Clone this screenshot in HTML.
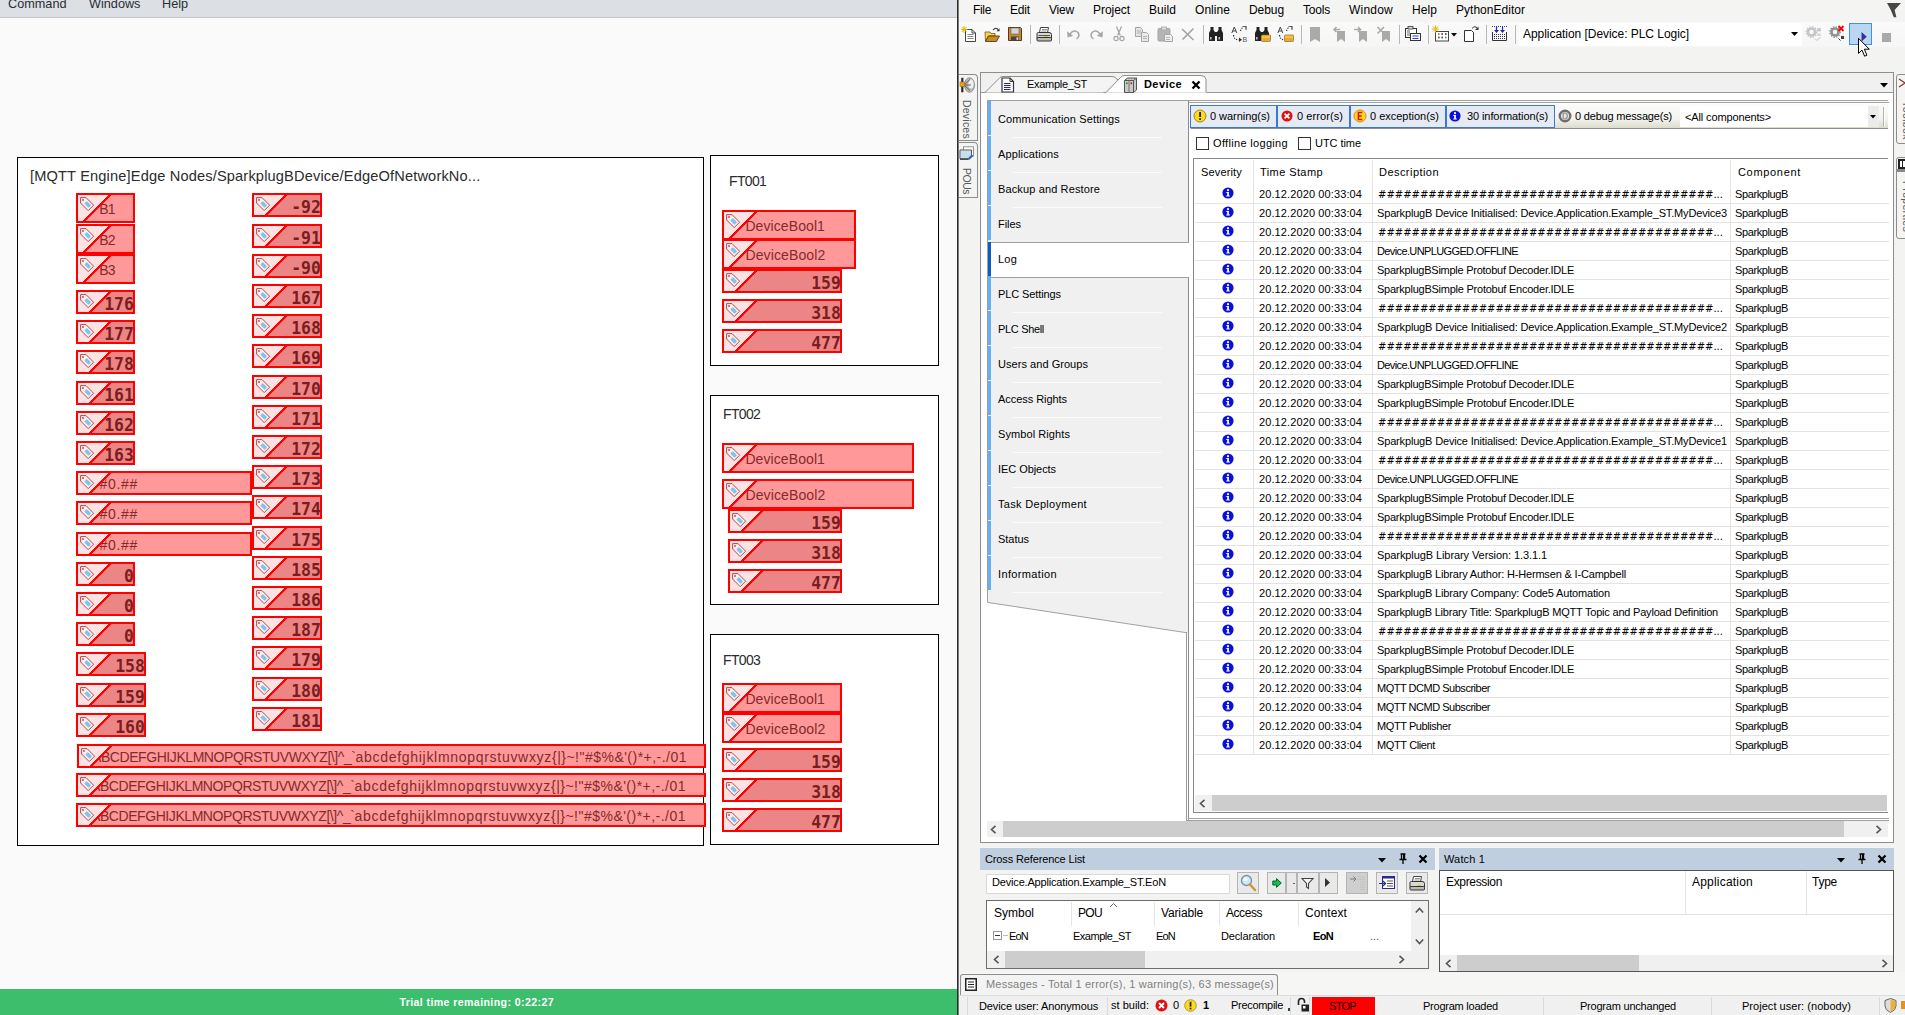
<!DOCTYPE html>
<html><head><meta charset="utf-8"><title>screen</title><style>
*{box-sizing:border-box;margin:0;padding:0}
html,body{width:1905px;height:1015px;overflow:hidden;background:#fafafa}
body{position:relative;font-family:"Liberation Sans",sans-serif;font-size:11px;color:#000}
.a{position:absolute;white-space:pre}
.lt{position:absolute;white-space:pre;font-family:"Liberation Sans",sans-serif;color:#2b2b2b}
.t{position:absolute;border:2px solid #f00;overflow:hidden;white-space:pre}
.t::after{content:"";position:absolute;left:0;top:0;right:0;bottom:0;
 background-image:linear-gradient(135deg,rgba(253,231,231,.95) 0,rgba(253,231,231,.95) 21.2px,#f00 21.9px,#f00 23.4px,rgba(255,0,0,0) 24.1px)}
.t.l{background-color:#ff9999;color:#832a2a;font-size:14px}
.t.l i{font-style:normal;display:inline-block}
.t.n{background-color:#ec8686;color:#7d1c1c;font-family:"DejaVu Sans Mono",monospace;font-weight:bold;font-size:16.5px;text-align:right}
.t.n span{transform:scaleY(1.07);transform-origin:50% 55%}
.t svg{position:absolute;left:2px;top:2px;z-index:2}
.t span{position:absolute}
.box{position:absolute;border:1px solid #000;background:#fff}
</style></head><body>
<div class="a" style="left:0;top:0;width:957px;height:18px;background:#dcdfe3;border-bottom:1px solid #c3c6ca"></div>
<div class="lt" style="left:8px;top:-6px;font-size:12.7px;line-height:20px;color:#2a2e33">Command</div>
<div class="lt" style="left:89px;top:-6px;font-size:12.7px;line-height:20px;color:#2a2e33">Windows</div>
<div class="lt" style="left:162px;top:-6px;font-size:12.7px;line-height:20px;color:#2a2e33">Help</div>
<div class="box" style="left:17px;top:157px;width:687px;height:689px"></div>
<div class="lt" style="left:30px;top:166px;font-size:14.6px;line-height:20px;letter-spacing:0.161px;">[MQTT Engine]Edge Nodes/SparkplugBDevice/EdgeOfNetworkNo...</div>
<div class="t l" style="left:76px;top:193px;width:59px;height:30px"><svg width="15" height="15" viewBox="0 0 15 15"><path d="M0.6 0.6H6L13.6 8.2L8.2 13.6L0.6 6Z" fill="#fdeeee" stroke="#b24a4a" stroke-width="1"/><circle cx="3" cy="3" r="0.9" fill="#b24a4a"/><rect x="4.6" y="5.6" width="6.2" height="3.6" rx="1" transform="rotate(45 7.7 7.4)" fill="#7cc4f2"/></svg><span style="left:21.200000000000003px;top:0;line-height:28px;letter-spacing:-0.812px;">B1</span></div>
<div class="t l" style="left:76px;top:224px;width:59px;height:30px"><svg width="15" height="15" viewBox="0 0 15 15"><path d="M0.6 0.6H6L13.6 8.2L8.2 13.6L0.6 6Z" fill="#fdeeee" stroke="#b24a4a" stroke-width="1"/><circle cx="3" cy="3" r="0.9" fill="#b24a4a"/><rect x="4.6" y="5.6" width="6.2" height="3.6" rx="1" transform="rotate(45 7.7 7.4)" fill="#7cc4f2"/></svg><span style="left:21.200000000000003px;top:0;line-height:28px;letter-spacing:-0.812px;">B2</span></div>
<div class="t l" style="left:76px;top:254px;width:59px;height:30px"><svg width="15" height="15" viewBox="0 0 15 15"><path d="M0.6 0.6H6L13.6 8.2L8.2 13.6L0.6 6Z" fill="#fdeeee" stroke="#b24a4a" stroke-width="1"/><circle cx="3" cy="3" r="0.9" fill="#b24a4a"/><rect x="4.6" y="5.6" width="6.2" height="3.6" rx="1" transform="rotate(45 7.7 7.4)" fill="#7cc4f2"/></svg><span style="left:21.200000000000003px;top:0;line-height:28px;letter-spacing:-0.812px;">B3</span></div>
<div class="t n" style="left:76px;top:290px;width:59px;height:24px"><svg width="15" height="15" viewBox="0 0 15 15"><path d="M0.6 0.6H6L13.6 8.2L8.2 13.6L0.6 6Z" fill="#fdeeee" stroke="#b24a4a" stroke-width="1"/><circle cx="3" cy="3" r="0.9" fill="#b24a4a"/><rect x="4.6" y="5.6" width="6.2" height="3.6" rx="1" transform="rotate(45 7.7 7.4)" fill="#7cc4f2"/></svg><span style="right:-1px;top:0.8px;line-height:23px">176</span></div>
<div class="t n" style="left:76px;top:320px;width:59px;height:24px"><svg width="15" height="15" viewBox="0 0 15 15"><path d="M0.6 0.6H6L13.6 8.2L8.2 13.6L0.6 6Z" fill="#fdeeee" stroke="#b24a4a" stroke-width="1"/><circle cx="3" cy="3" r="0.9" fill="#b24a4a"/><rect x="4.6" y="5.6" width="6.2" height="3.6" rx="1" transform="rotate(45 7.7 7.4)" fill="#7cc4f2"/></svg><span style="right:-1px;top:0.8px;line-height:23px">177</span></div>
<div class="t n" style="left:76px;top:350px;width:59px;height:24px"><svg width="15" height="15" viewBox="0 0 15 15"><path d="M0.6 0.6H6L13.6 8.2L8.2 13.6L0.6 6Z" fill="#fdeeee" stroke="#b24a4a" stroke-width="1"/><circle cx="3" cy="3" r="0.9" fill="#b24a4a"/><rect x="4.6" y="5.6" width="6.2" height="3.6" rx="1" transform="rotate(45 7.7 7.4)" fill="#7cc4f2"/></svg><span style="right:-1px;top:0.8px;line-height:23px">178</span></div>
<div class="t n" style="left:76px;top:381px;width:59px;height:24px"><svg width="15" height="15" viewBox="0 0 15 15"><path d="M0.6 0.6H6L13.6 8.2L8.2 13.6L0.6 6Z" fill="#fdeeee" stroke="#b24a4a" stroke-width="1"/><circle cx="3" cy="3" r="0.9" fill="#b24a4a"/><rect x="4.6" y="5.6" width="6.2" height="3.6" rx="1" transform="rotate(45 7.7 7.4)" fill="#7cc4f2"/></svg><span style="right:-1px;top:0.8px;line-height:23px">161</span></div>
<div class="t n" style="left:76px;top:411px;width:59px;height:24px"><svg width="15" height="15" viewBox="0 0 15 15"><path d="M0.6 0.6H6L13.6 8.2L8.2 13.6L0.6 6Z" fill="#fdeeee" stroke="#b24a4a" stroke-width="1"/><circle cx="3" cy="3" r="0.9" fill="#b24a4a"/><rect x="4.6" y="5.6" width="6.2" height="3.6" rx="1" transform="rotate(45 7.7 7.4)" fill="#7cc4f2"/></svg><span style="right:-1px;top:0.8px;line-height:23px">162</span></div>
<div class="t n" style="left:76px;top:441px;width:59px;height:24px"><svg width="15" height="15" viewBox="0 0 15 15"><path d="M0.6 0.6H6L13.6 8.2L8.2 13.6L0.6 6Z" fill="#fdeeee" stroke="#b24a4a" stroke-width="1"/><circle cx="3" cy="3" r="0.9" fill="#b24a4a"/><rect x="4.6" y="5.6" width="6.2" height="3.6" rx="1" transform="rotate(45 7.7 7.4)" fill="#7cc4f2"/></svg><span style="right:-1px;top:0.8px;line-height:23px">163</span></div>
<div class="t l" style="left:76px;top:471px;width:176px;height:24px"><svg width="15" height="15" viewBox="0 0 15 15"><path d="M0.6 0.6H6L13.6 8.2L8.2 13.6L0.6 6Z" fill="#fdeeee" stroke="#b24a4a" stroke-width="1"/><circle cx="3" cy="3" r="0.9" fill="#b24a4a"/><rect x="4.6" y="5.6" width="6.2" height="3.6" rx="1" transform="rotate(45 7.7 7.4)" fill="#7cc4f2"/></svg><span style="left:21.599999999999994px;top:0;line-height:22px;letter-spacing:0.671px;">#0.##</span></div>
<div class="t l" style="left:76px;top:501px;width:176px;height:24px"><svg width="15" height="15" viewBox="0 0 15 15"><path d="M0.6 0.6H6L13.6 8.2L8.2 13.6L0.6 6Z" fill="#fdeeee" stroke="#b24a4a" stroke-width="1"/><circle cx="3" cy="3" r="0.9" fill="#b24a4a"/><rect x="4.6" y="5.6" width="6.2" height="3.6" rx="1" transform="rotate(45 7.7 7.4)" fill="#7cc4f2"/></svg><span style="left:21.599999999999994px;top:0;line-height:22px;letter-spacing:0.671px;">#0.##</span></div>
<div class="t l" style="left:76px;top:532px;width:176px;height:24px"><svg width="15" height="15" viewBox="0 0 15 15"><path d="M0.6 0.6H6L13.6 8.2L8.2 13.6L0.6 6Z" fill="#fdeeee" stroke="#b24a4a" stroke-width="1"/><circle cx="3" cy="3" r="0.9" fill="#b24a4a"/><rect x="4.6" y="5.6" width="6.2" height="3.6" rx="1" transform="rotate(45 7.7 7.4)" fill="#7cc4f2"/></svg><span style="left:21.599999999999994px;top:0;line-height:22px;letter-spacing:0.671px;">#0.##</span></div>
<div class="t n" style="left:76px;top:562px;width:59px;height:24px"><svg width="15" height="15" viewBox="0 0 15 15"><path d="M0.6 0.6H6L13.6 8.2L8.2 13.6L0.6 6Z" fill="#fdeeee" stroke="#b24a4a" stroke-width="1"/><circle cx="3" cy="3" r="0.9" fill="#b24a4a"/><rect x="4.6" y="5.6" width="6.2" height="3.6" rx="1" transform="rotate(45 7.7 7.4)" fill="#7cc4f2"/></svg><span style="right:-1px;top:0.8px;line-height:23px">0</span></div>
<div class="t n" style="left:76px;top:592px;width:59px;height:24px"><svg width="15" height="15" viewBox="0 0 15 15"><path d="M0.6 0.6H6L13.6 8.2L8.2 13.6L0.6 6Z" fill="#fdeeee" stroke="#b24a4a" stroke-width="1"/><circle cx="3" cy="3" r="0.9" fill="#b24a4a"/><rect x="4.6" y="5.6" width="6.2" height="3.6" rx="1" transform="rotate(45 7.7 7.4)" fill="#7cc4f2"/></svg><span style="right:-1px;top:0.8px;line-height:23px">0</span></div>
<div class="t n" style="left:76px;top:622px;width:59px;height:24px"><svg width="15" height="15" viewBox="0 0 15 15"><path d="M0.6 0.6H6L13.6 8.2L8.2 13.6L0.6 6Z" fill="#fdeeee" stroke="#b24a4a" stroke-width="1"/><circle cx="3" cy="3" r="0.9" fill="#b24a4a"/><rect x="4.6" y="5.6" width="6.2" height="3.6" rx="1" transform="rotate(45 7.7 7.4)" fill="#7cc4f2"/></svg><span style="right:-1px;top:0.8px;line-height:23px">0</span></div>
<div class="t n" style="left:76px;top:652px;width:70px;height:24px"><svg width="15" height="15" viewBox="0 0 15 15"><path d="M0.6 0.6H6L13.6 8.2L8.2 13.6L0.6 6Z" fill="#fdeeee" stroke="#b24a4a" stroke-width="1"/><circle cx="3" cy="3" r="0.9" fill="#b24a4a"/><rect x="4.6" y="5.6" width="6.2" height="3.6" rx="1" transform="rotate(45 7.7 7.4)" fill="#7cc4f2"/></svg><span style="right:-1px;top:0.8px;line-height:23px">158</span></div>
<div class="t n" style="left:76px;top:683px;width:70px;height:24px"><svg width="15" height="15" viewBox="0 0 15 15"><path d="M0.6 0.6H6L13.6 8.2L8.2 13.6L0.6 6Z" fill="#fdeeee" stroke="#b24a4a" stroke-width="1"/><circle cx="3" cy="3" r="0.9" fill="#b24a4a"/><rect x="4.6" y="5.6" width="6.2" height="3.6" rx="1" transform="rotate(45 7.7 7.4)" fill="#7cc4f2"/></svg><span style="right:-1px;top:0.8px;line-height:23px">159</span></div>
<div class="t n" style="left:76px;top:713px;width:70px;height:24px"><svg width="15" height="15" viewBox="0 0 15 15"><path d="M0.6 0.6H6L13.6 8.2L8.2 13.6L0.6 6Z" fill="#fdeeee" stroke="#b24a4a" stroke-width="1"/><circle cx="3" cy="3" r="0.9" fill="#b24a4a"/><rect x="4.6" y="5.6" width="6.2" height="3.6" rx="1" transform="rotate(45 7.7 7.4)" fill="#7cc4f2"/></svg><span style="right:-1px;top:0.8px;line-height:23px">160</span></div>
<div class="t l" style="left:77px;top:744px;width:629px;height:24px"><svg width="15" height="15" viewBox="0 0 15 15"><path d="M0.6 0.6H6L13.6 8.2L8.2 13.6L0.6 6Z" fill="#fdeeee" stroke="#b24a4a" stroke-width="1"/><circle cx="3" cy="3" r="0.9" fill="#b24a4a"/><rect x="4.6" y="5.6" width="6.2" height="3.6" rx="1" transform="rotate(45 7.7 7.4)" fill="#7cc4f2"/></svg><span style="left:13px;top:0;line-height:22px;"><i style="letter-spacing:-0.430px;">ABCDEFGHIJKLMNOPQRSTUVWXYZ[\]^_`</i><i style="letter-spacing:0.704px;">abcdefghijklmnopqrstuvwxyz</i><i style="letter-spacing:0.481px;">{|}~!&quot;#$%&amp;&#x27;()*+,-./01</i></span></div>
<div class="t l" style="left:76px;top:773px;width:630px;height:24px"><svg width="15" height="15" viewBox="0 0 15 15"><path d="M0.6 0.6H6L13.6 8.2L8.2 13.6L0.6 6Z" fill="#fdeeee" stroke="#b24a4a" stroke-width="1"/><circle cx="3" cy="3" r="0.9" fill="#b24a4a"/><rect x="4.6" y="5.6" width="6.2" height="3.6" rx="1" transform="rotate(45 7.7 7.4)" fill="#7cc4f2"/></svg><span style="left:13px;top:0;line-height:22px;"><i style="letter-spacing:-0.430px;">ABCDEFGHIJKLMNOPQRSTUVWXYZ[\]^_`</i><i style="letter-spacing:0.704px;">abcdefghijklmnopqrstuvwxyz</i><i style="letter-spacing:0.481px;">{|}~!&quot;#$%&amp;&#x27;()*+,-./01</i></span></div>
<div class="t l" style="left:76px;top:803px;width:630px;height:24px"><svg width="15" height="15" viewBox="0 0 15 15"><path d="M0.6 0.6H6L13.6 8.2L8.2 13.6L0.6 6Z" fill="#fdeeee" stroke="#b24a4a" stroke-width="1"/><circle cx="3" cy="3" r="0.9" fill="#b24a4a"/><rect x="4.6" y="5.6" width="6.2" height="3.6" rx="1" transform="rotate(45 7.7 7.4)" fill="#7cc4f2"/></svg><span style="left:13px;top:0;line-height:22px;"><i style="letter-spacing:-0.430px;">ABCDEFGHIJKLMNOPQRSTUVWXYZ[\]^_`</i><i style="letter-spacing:0.704px;">abcdefghijklmnopqrstuvwxyz</i><i style="letter-spacing:0.481px;">{|}~!&quot;#$%&amp;&#x27;()*+,-./01</i></span></div>
<div class="t n" style="left:252px;top:193px;width:70px;height:24px"><svg width="15" height="15" viewBox="0 0 15 15"><path d="M0.6 0.6H6L13.6 8.2L8.2 13.6L0.6 6Z" fill="#fdeeee" stroke="#b24a4a" stroke-width="1"/><circle cx="3" cy="3" r="0.9" fill="#b24a4a"/><rect x="4.6" y="5.6" width="6.2" height="3.6" rx="1" transform="rotate(45 7.7 7.4)" fill="#7cc4f2"/></svg><span style="right:-1px;top:0.8px;line-height:23px">-92</span></div>
<div class="t n" style="left:252px;top:224px;width:70px;height:24px"><svg width="15" height="15" viewBox="0 0 15 15"><path d="M0.6 0.6H6L13.6 8.2L8.2 13.6L0.6 6Z" fill="#fdeeee" stroke="#b24a4a" stroke-width="1"/><circle cx="3" cy="3" r="0.9" fill="#b24a4a"/><rect x="4.6" y="5.6" width="6.2" height="3.6" rx="1" transform="rotate(45 7.7 7.4)" fill="#7cc4f2"/></svg><span style="right:-1px;top:0.8px;line-height:23px">-91</span></div>
<div class="t n" style="left:252px;top:254px;width:70px;height:24px"><svg width="15" height="15" viewBox="0 0 15 15"><path d="M0.6 0.6H6L13.6 8.2L8.2 13.6L0.6 6Z" fill="#fdeeee" stroke="#b24a4a" stroke-width="1"/><circle cx="3" cy="3" r="0.9" fill="#b24a4a"/><rect x="4.6" y="5.6" width="6.2" height="3.6" rx="1" transform="rotate(45 7.7 7.4)" fill="#7cc4f2"/></svg><span style="right:-1px;top:0.8px;line-height:23px">-90</span></div>
<div class="t n" style="left:252px;top:284px;width:70px;height:24px"><svg width="15" height="15" viewBox="0 0 15 15"><path d="M0.6 0.6H6L13.6 8.2L8.2 13.6L0.6 6Z" fill="#fdeeee" stroke="#b24a4a" stroke-width="1"/><circle cx="3" cy="3" r="0.9" fill="#b24a4a"/><rect x="4.6" y="5.6" width="6.2" height="3.6" rx="1" transform="rotate(45 7.7 7.4)" fill="#7cc4f2"/></svg><span style="right:-1px;top:0.8px;line-height:23px">167</span></div>
<div class="t n" style="left:252px;top:314px;width:70px;height:24px"><svg width="15" height="15" viewBox="0 0 15 15"><path d="M0.6 0.6H6L13.6 8.2L8.2 13.6L0.6 6Z" fill="#fdeeee" stroke="#b24a4a" stroke-width="1"/><circle cx="3" cy="3" r="0.9" fill="#b24a4a"/><rect x="4.6" y="5.6" width="6.2" height="3.6" rx="1" transform="rotate(45 7.7 7.4)" fill="#7cc4f2"/></svg><span style="right:-1px;top:0.8px;line-height:23px">168</span></div>
<div class="t n" style="left:252px;top:344px;width:70px;height:24px"><svg width="15" height="15" viewBox="0 0 15 15"><path d="M0.6 0.6H6L13.6 8.2L8.2 13.6L0.6 6Z" fill="#fdeeee" stroke="#b24a4a" stroke-width="1"/><circle cx="3" cy="3" r="0.9" fill="#b24a4a"/><rect x="4.6" y="5.6" width="6.2" height="3.6" rx="1" transform="rotate(45 7.7 7.4)" fill="#7cc4f2"/></svg><span style="right:-1px;top:0.8px;line-height:23px">169</span></div>
<div class="t n" style="left:252px;top:375px;width:70px;height:24px"><svg width="15" height="15" viewBox="0 0 15 15"><path d="M0.6 0.6H6L13.6 8.2L8.2 13.6L0.6 6Z" fill="#fdeeee" stroke="#b24a4a" stroke-width="1"/><circle cx="3" cy="3" r="0.9" fill="#b24a4a"/><rect x="4.6" y="5.6" width="6.2" height="3.6" rx="1" transform="rotate(45 7.7 7.4)" fill="#7cc4f2"/></svg><span style="right:-1px;top:0.8px;line-height:23px">170</span></div>
<div class="t n" style="left:252px;top:405px;width:70px;height:24px"><svg width="15" height="15" viewBox="0 0 15 15"><path d="M0.6 0.6H6L13.6 8.2L8.2 13.6L0.6 6Z" fill="#fdeeee" stroke="#b24a4a" stroke-width="1"/><circle cx="3" cy="3" r="0.9" fill="#b24a4a"/><rect x="4.6" y="5.6" width="6.2" height="3.6" rx="1" transform="rotate(45 7.7 7.4)" fill="#7cc4f2"/></svg><span style="right:-1px;top:0.8px;line-height:23px">171</span></div>
<div class="t n" style="left:252px;top:435px;width:70px;height:24px"><svg width="15" height="15" viewBox="0 0 15 15"><path d="M0.6 0.6H6L13.6 8.2L8.2 13.6L0.6 6Z" fill="#fdeeee" stroke="#b24a4a" stroke-width="1"/><circle cx="3" cy="3" r="0.9" fill="#b24a4a"/><rect x="4.6" y="5.6" width="6.2" height="3.6" rx="1" transform="rotate(45 7.7 7.4)" fill="#7cc4f2"/></svg><span style="right:-1px;top:0.8px;line-height:23px">172</span></div>
<div class="t n" style="left:252px;top:465px;width:70px;height:24px"><svg width="15" height="15" viewBox="0 0 15 15"><path d="M0.6 0.6H6L13.6 8.2L8.2 13.6L0.6 6Z" fill="#fdeeee" stroke="#b24a4a" stroke-width="1"/><circle cx="3" cy="3" r="0.9" fill="#b24a4a"/><rect x="4.6" y="5.6" width="6.2" height="3.6" rx="1" transform="rotate(45 7.7 7.4)" fill="#7cc4f2"/></svg><span style="right:-1px;top:0.8px;line-height:23px">173</span></div>
<div class="t n" style="left:252px;top:495px;width:70px;height:24px"><svg width="15" height="15" viewBox="0 0 15 15"><path d="M0.6 0.6H6L13.6 8.2L8.2 13.6L0.6 6Z" fill="#fdeeee" stroke="#b24a4a" stroke-width="1"/><circle cx="3" cy="3" r="0.9" fill="#b24a4a"/><rect x="4.6" y="5.6" width="6.2" height="3.6" rx="1" transform="rotate(45 7.7 7.4)" fill="#7cc4f2"/></svg><span style="right:-1px;top:0.8px;line-height:23px">174</span></div>
<div class="t n" style="left:252px;top:526px;width:70px;height:24px"><svg width="15" height="15" viewBox="0 0 15 15"><path d="M0.6 0.6H6L13.6 8.2L8.2 13.6L0.6 6Z" fill="#fdeeee" stroke="#b24a4a" stroke-width="1"/><circle cx="3" cy="3" r="0.9" fill="#b24a4a"/><rect x="4.6" y="5.6" width="6.2" height="3.6" rx="1" transform="rotate(45 7.7 7.4)" fill="#7cc4f2"/></svg><span style="right:-1px;top:0.8px;line-height:23px">175</span></div>
<div class="t n" style="left:252px;top:556px;width:70px;height:24px"><svg width="15" height="15" viewBox="0 0 15 15"><path d="M0.6 0.6H6L13.6 8.2L8.2 13.6L0.6 6Z" fill="#fdeeee" stroke="#b24a4a" stroke-width="1"/><circle cx="3" cy="3" r="0.9" fill="#b24a4a"/><rect x="4.6" y="5.6" width="6.2" height="3.6" rx="1" transform="rotate(45 7.7 7.4)" fill="#7cc4f2"/></svg><span style="right:-1px;top:0.8px;line-height:23px">185</span></div>
<div class="t n" style="left:252px;top:586px;width:70px;height:24px"><svg width="15" height="15" viewBox="0 0 15 15"><path d="M0.6 0.6H6L13.6 8.2L8.2 13.6L0.6 6Z" fill="#fdeeee" stroke="#b24a4a" stroke-width="1"/><circle cx="3" cy="3" r="0.9" fill="#b24a4a"/><rect x="4.6" y="5.6" width="6.2" height="3.6" rx="1" transform="rotate(45 7.7 7.4)" fill="#7cc4f2"/></svg><span style="right:-1px;top:0.8px;line-height:23px">186</span></div>
<div class="t n" style="left:252px;top:616px;width:70px;height:24px"><svg width="15" height="15" viewBox="0 0 15 15"><path d="M0.6 0.6H6L13.6 8.2L8.2 13.6L0.6 6Z" fill="#fdeeee" stroke="#b24a4a" stroke-width="1"/><circle cx="3" cy="3" r="0.9" fill="#b24a4a"/><rect x="4.6" y="5.6" width="6.2" height="3.6" rx="1" transform="rotate(45 7.7 7.4)" fill="#7cc4f2"/></svg><span style="right:-1px;top:0.8px;line-height:23px">187</span></div>
<div class="t n" style="left:252px;top:646px;width:70px;height:24px"><svg width="15" height="15" viewBox="0 0 15 15"><path d="M0.6 0.6H6L13.6 8.2L8.2 13.6L0.6 6Z" fill="#fdeeee" stroke="#b24a4a" stroke-width="1"/><circle cx="3" cy="3" r="0.9" fill="#b24a4a"/><rect x="4.6" y="5.6" width="6.2" height="3.6" rx="1" transform="rotate(45 7.7 7.4)" fill="#7cc4f2"/></svg><span style="right:-1px;top:0.8px;line-height:23px">179</span></div>
<div class="t n" style="left:252px;top:677px;width:70px;height:24px"><svg width="15" height="15" viewBox="0 0 15 15"><path d="M0.6 0.6H6L13.6 8.2L8.2 13.6L0.6 6Z" fill="#fdeeee" stroke="#b24a4a" stroke-width="1"/><circle cx="3" cy="3" r="0.9" fill="#b24a4a"/><rect x="4.6" y="5.6" width="6.2" height="3.6" rx="1" transform="rotate(45 7.7 7.4)" fill="#7cc4f2"/></svg><span style="right:-1px;top:0.8px;line-height:23px">180</span></div>
<div class="t n" style="left:252px;top:707px;width:70px;height:24px"><svg width="15" height="15" viewBox="0 0 15 15"><path d="M0.6 0.6H6L13.6 8.2L8.2 13.6L0.6 6Z" fill="#fdeeee" stroke="#b24a4a" stroke-width="1"/><circle cx="3" cy="3" r="0.9" fill="#b24a4a"/><rect x="4.6" y="5.6" width="6.2" height="3.6" rx="1" transform="rotate(45 7.7 7.4)" fill="#7cc4f2"/></svg><span style="right:-1px;top:0.8px;line-height:23px">181</span></div>
<div class="box" style="left:710px;top:155px;width:229px;height:211px"></div>
<div class="lt" style="left:729px;top:171px;font-size:14px;line-height:20px;letter-spacing:-0.654px;">FT001</div>
<div class="t l" style="left:722px;top:210px;width:134px;height:30px"><svg width="15" height="15" viewBox="0 0 15 15"><path d="M0.6 0.6H6L13.6 8.2L8.2 13.6L0.6 6Z" fill="#fdeeee" stroke="#b24a4a" stroke-width="1"/><circle cx="3" cy="3" r="0.9" fill="#b24a4a"/><rect x="4.6" y="5.6" width="6.2" height="3.6" rx="1" transform="rotate(45 7.7 7.4)" fill="#7cc4f2"/></svg><span style="left:21.399999999999977px;top:0;line-height:28px;letter-spacing:0.090px;">DeviceBool1</span></div>
<div class="t l" style="left:722px;top:239px;width:134px;height:30px"><svg width="15" height="15" viewBox="0 0 15 15"><path d="M0.6 0.6H6L13.6 8.2L8.2 13.6L0.6 6Z" fill="#fdeeee" stroke="#b24a4a" stroke-width="1"/><circle cx="3" cy="3" r="0.9" fill="#b24a4a"/><rect x="4.6" y="5.6" width="6.2" height="3.6" rx="1" transform="rotate(45 7.7 7.4)" fill="#7cc4f2"/></svg><span style="left:21.399999999999977px;top:0;line-height:28px;letter-spacing:0.126px;">DeviceBool2</span></div>
<div class="t n" style="left:722px;top:269px;width:120px;height:24px"><svg width="15" height="15" viewBox="0 0 15 15"><path d="M0.6 0.6H6L13.6 8.2L8.2 13.6L0.6 6Z" fill="#fdeeee" stroke="#b24a4a" stroke-width="1"/><circle cx="3" cy="3" r="0.9" fill="#b24a4a"/><rect x="4.6" y="5.6" width="6.2" height="3.6" rx="1" transform="rotate(45 7.7 7.4)" fill="#7cc4f2"/></svg><span style="right:-1px;top:0.8px;line-height:23px">159</span></div>
<div class="t n" style="left:722px;top:299px;width:120px;height:24px"><svg width="15" height="15" viewBox="0 0 15 15"><path d="M0.6 0.6H6L13.6 8.2L8.2 13.6L0.6 6Z" fill="#fdeeee" stroke="#b24a4a" stroke-width="1"/><circle cx="3" cy="3" r="0.9" fill="#b24a4a"/><rect x="4.6" y="5.6" width="6.2" height="3.6" rx="1" transform="rotate(45 7.7 7.4)" fill="#7cc4f2"/></svg><span style="right:-1px;top:0.8px;line-height:23px">318</span></div>
<div class="t n" style="left:722px;top:329px;width:120px;height:24px"><svg width="15" height="15" viewBox="0 0 15 15"><path d="M0.6 0.6H6L13.6 8.2L8.2 13.6L0.6 6Z" fill="#fdeeee" stroke="#b24a4a" stroke-width="1"/><circle cx="3" cy="3" r="0.9" fill="#b24a4a"/><rect x="4.6" y="5.6" width="6.2" height="3.6" rx="1" transform="rotate(45 7.7 7.4)" fill="#7cc4f2"/></svg><span style="right:-1px;top:0.8px;line-height:23px">477</span></div>
<div class="box" style="left:710px;top:395px;width:229px;height:210px"></div>
<div class="lt" style="left:723px;top:404px;font-size:14px;line-height:20px;letter-spacing:-0.654px;">FT002</div>
<div class="t l" style="left:722px;top:443px;width:192px;height:30px"><svg width="15" height="15" viewBox="0 0 15 15"><path d="M0.6 0.6H6L13.6 8.2L8.2 13.6L0.6 6Z" fill="#fdeeee" stroke="#b24a4a" stroke-width="1"/><circle cx="3" cy="3" r="0.9" fill="#b24a4a"/><rect x="4.6" y="5.6" width="6.2" height="3.6" rx="1" transform="rotate(45 7.7 7.4)" fill="#7cc4f2"/></svg><span style="left:21.399999999999977px;top:0;line-height:28px;letter-spacing:0.090px;">DeviceBool1</span></div>
<div class="t l" style="left:722px;top:479px;width:192px;height:30px"><svg width="15" height="15" viewBox="0 0 15 15"><path d="M0.6 0.6H6L13.6 8.2L8.2 13.6L0.6 6Z" fill="#fdeeee" stroke="#b24a4a" stroke-width="1"/><circle cx="3" cy="3" r="0.9" fill="#b24a4a"/><rect x="4.6" y="5.6" width="6.2" height="3.6" rx="1" transform="rotate(45 7.7 7.4)" fill="#7cc4f2"/></svg><span style="left:21.399999999999977px;top:0;line-height:28px;letter-spacing:0.126px;">DeviceBool2</span></div>
<div class="t n" style="left:728px;top:509px;width:114px;height:24px"><svg width="15" height="15" viewBox="0 0 15 15"><path d="M0.6 0.6H6L13.6 8.2L8.2 13.6L0.6 6Z" fill="#fdeeee" stroke="#b24a4a" stroke-width="1"/><circle cx="3" cy="3" r="0.9" fill="#b24a4a"/><rect x="4.6" y="5.6" width="6.2" height="3.6" rx="1" transform="rotate(45 7.7 7.4)" fill="#7cc4f2"/></svg><span style="right:-1px;top:0.8px;line-height:23px">159</span></div>
<div class="t n" style="left:728px;top:539px;width:114px;height:24px"><svg width="15" height="15" viewBox="0 0 15 15"><path d="M0.6 0.6H6L13.6 8.2L8.2 13.6L0.6 6Z" fill="#fdeeee" stroke="#b24a4a" stroke-width="1"/><circle cx="3" cy="3" r="0.9" fill="#b24a4a"/><rect x="4.6" y="5.6" width="6.2" height="3.6" rx="1" transform="rotate(45 7.7 7.4)" fill="#7cc4f2"/></svg><span style="right:-1px;top:0.8px;line-height:23px">318</span></div>
<div class="t n" style="left:728px;top:569px;width:114px;height:24px"><svg width="15" height="15" viewBox="0 0 15 15"><path d="M0.6 0.6H6L13.6 8.2L8.2 13.6L0.6 6Z" fill="#fdeeee" stroke="#b24a4a" stroke-width="1"/><circle cx="3" cy="3" r="0.9" fill="#b24a4a"/><rect x="4.6" y="5.6" width="6.2" height="3.6" rx="1" transform="rotate(45 7.7 7.4)" fill="#7cc4f2"/></svg><span style="right:-1px;top:0.8px;line-height:23px">477</span></div>
<div class="box" style="left:710px;top:634px;width:229px;height:211px"></div>
<div class="lt" style="left:723px;top:650px;font-size:14px;line-height:20px;letter-spacing:-0.654px;">FT003</div>
<div class="t l" style="left:722px;top:683px;width:120px;height:30px"><svg width="15" height="15" viewBox="0 0 15 15"><path d="M0.6 0.6H6L13.6 8.2L8.2 13.6L0.6 6Z" fill="#fdeeee" stroke="#b24a4a" stroke-width="1"/><circle cx="3" cy="3" r="0.9" fill="#b24a4a"/><rect x="4.6" y="5.6" width="6.2" height="3.6" rx="1" transform="rotate(45 7.7 7.4)" fill="#7cc4f2"/></svg><span style="left:21.399999999999977px;top:0;line-height:28px;letter-spacing:0.090px;">DeviceBool1</span></div>
<div class="t l" style="left:722px;top:713px;width:120px;height:30px"><svg width="15" height="15" viewBox="0 0 15 15"><path d="M0.6 0.6H6L13.6 8.2L8.2 13.6L0.6 6Z" fill="#fdeeee" stroke="#b24a4a" stroke-width="1"/><circle cx="3" cy="3" r="0.9" fill="#b24a4a"/><rect x="4.6" y="5.6" width="6.2" height="3.6" rx="1" transform="rotate(45 7.7 7.4)" fill="#7cc4f2"/></svg><span style="left:21.399999999999977px;top:0;line-height:28px;letter-spacing:0.126px;">DeviceBool2</span></div>
<div class="t n" style="left:722px;top:748px;width:120px;height:24px"><svg width="15" height="15" viewBox="0 0 15 15"><path d="M0.6 0.6H6L13.6 8.2L8.2 13.6L0.6 6Z" fill="#fdeeee" stroke="#b24a4a" stroke-width="1"/><circle cx="3" cy="3" r="0.9" fill="#b24a4a"/><rect x="4.6" y="5.6" width="6.2" height="3.6" rx="1" transform="rotate(45 7.7 7.4)" fill="#7cc4f2"/></svg><span style="right:-1px;top:0.8px;line-height:23px">159</span></div>
<div class="t n" style="left:722px;top:778px;width:120px;height:24px"><svg width="15" height="15" viewBox="0 0 15 15"><path d="M0.6 0.6H6L13.6 8.2L8.2 13.6L0.6 6Z" fill="#fdeeee" stroke="#b24a4a" stroke-width="1"/><circle cx="3" cy="3" r="0.9" fill="#b24a4a"/><rect x="4.6" y="5.6" width="6.2" height="3.6" rx="1" transform="rotate(45 7.7 7.4)" fill="#7cc4f2"/></svg><span style="right:-1px;top:0.8px;line-height:23px">318</span></div>
<div class="t n" style="left:722px;top:808px;width:120px;height:24px"><svg width="15" height="15" viewBox="0 0 15 15"><path d="M0.6 0.6H6L13.6 8.2L8.2 13.6L0.6 6Z" fill="#fdeeee" stroke="#b24a4a" stroke-width="1"/><circle cx="3" cy="3" r="0.9" fill="#b24a4a"/><rect x="4.6" y="5.6" width="6.2" height="3.6" rx="1" transform="rotate(45 7.7 7.4)" fill="#7cc4f2"/></svg><span style="right:-1px;top:0.8px;line-height:23px">477</span></div>
<div class="a" style="left:0;top:989px;width:957px;height:26px;background:#3cbe6c"></div>
<div class="a" style="left:399.4px;top:995.43px;line-height:15px;font-size:10.6px;letter-spacing:0.397px;font-weight:bold;color:#fff;">Trial time remaining: 0:22:27</div>
<div class="a" style="left:957px;top:0;width:1px;height:1015px;background:#2c2c2c"></div><div class="a" style="left:958px;top:0;width:1px;height:1015px;background:#7a7a7a"></div>
<div class="a" style="left:959px;top:0;width:946px;height:1015px;background:#f0f0f0"></div>
<div class="a" style="left:959px;top:0px;width:946px;height:1015px;background:#f3f3f2;"></div>
<div class="a" style="left:959px;top:0px;width:946px;height:21px;background:#f4f4f3;"></div>
<div class="a" style="left:959px;top:22px;width:946px;height:25px;background:linear-gradient(#fafafa,#f6f6f6);"></div>
<div class="a" style="left:973px;top:2.14px;line-height:17px;font-size:12px;letter-spacing:-0.336px;">File</div>
<div class="a" style="left:1010px;top:2.14px;line-height:17px;font-size:12px;letter-spacing:-0.172px;">Edit</div>
<div class="a" style="left:1049px;top:2.14px;line-height:17px;font-size:12px;letter-spacing:-0.199px;">View</div>
<div class="a" style="left:1093px;top:2.14px;line-height:17px;font-size:12px;letter-spacing:-0.051px;">Project</div>
<div class="a" style="left:1149px;top:2.14px;line-height:17px;font-size:12px;letter-spacing:0.062px;">Build</div>
<div class="a" style="left:1195px;top:2.14px;line-height:17px;font-size:12px;letter-spacing:0.052px;">Online</div>
<div class="a" style="left:1249px;top:2.14px;line-height:17px;font-size:12px;letter-spacing:-0.075px;">Debug</div>
<div class="a" style="left:1303px;top:2.14px;line-height:17px;font-size:12px;letter-spacing:-0.203px;">Tools</div>
<div class="a" style="left:1349px;top:2.14px;line-height:17px;font-size:12px;letter-spacing:0.219px;">Window</div>
<div class="a" style="left:1412px;top:2.14px;line-height:17px;font-size:12px;letter-spacing:0.078px;">Help</div>
<div class="a" style="left:1456px;top:2.14px;line-height:17px;font-size:12px;letter-spacing:0.023px;">PythonEditor</div>
<svg class="a" style="left:961px;top:26px;" width="16" height="16" viewBox="0 0 16 16"><path d="M4.5 3.5H11L14.5 7V15.5H4.5Z" fill="#fff" stroke="#444" stroke-width="1"/><path d="M11 3.5V7H14.5" fill="none" stroke="#444"/><path d="M6.5 8.5H12.5M6.5 10.5H12.5M6.5 12.5H12.5" stroke="#888" stroke-width="1"/><path d="M3 0V7M0 3.5H6.5M0.8 1L5.5 6M5.5 1L0.8 6" stroke="#e8b400" stroke-width="1"/></svg><svg class="a" style="left:984px;top:26px;" width="16" height="16" viewBox="0 0 16 16"><path d="M1 6H6L7 7.5H11V10H4.5L1.5 15Z" fill="#f5d34a" stroke="#7a5a10" stroke-width="0.8"/><path d="M4.5 10H15.5L12.5 15.5H1.5Z" fill="#c98a2b" stroke="#5a3a08" stroke-width="0.9"/><path d="M9 4Q12 0.5 14.5 4" fill="none" stroke="#333" stroke-width="1.1"/><path d="M15.5 2.2V5.2H12.5Z" fill="#333"/></svg><svg class="a" style="left:1007px;top:26px;" width="16" height="16" viewBox="0 0 16 16"><path d="M1.5 1.5H13.5L14.5 2.5V14.5H1.5Z" fill="#c8872d" stroke="#5a3a10" stroke-width="1"/><rect x="4" y="2" width="8" height="6" fill="#d6d6d6" stroke="#666" stroke-width="0.6"/><rect x="4" y="10.5" width="8" height="4" fill="#444"/><rect x="9.5" y="11.3" width="1.8" height="2.6" fill="#ddd"/></svg><div class="a" style="left:1030px;top:25px;width:1px;height:19px;background:#b8b8b8;"></div><svg class="a" style="left:1036px;top:26px;" width="16" height="16" viewBox="0 0 16 16"><path d="M4.5 1.5H12.5L11.5 6.5H3.5Z" fill="#fff" stroke="#444" stroke-width="1"/><path d="M6 3.5H11M5.5 5H10.5" stroke="#777" stroke-width="0.8"/><path d="M1 7.5Q1 6.5 2.5 6.5H13Q15.5 6.5 15.5 8.5V12.5H1Z" fill="#d8d8d8" stroke="#333" stroke-width="1"/><rect x="1" y="11.5" width="14.5" height="3.5" rx="1" fill="#bbb" stroke="#333" stroke-width="1"/><rect x="8.5" y="9.8" width="3.2" height="1.2" fill="#f0c000"/><path d="M2.5 9.5H14" stroke="#555" stroke-width="1"/></svg><div class="a" style="left:1059px;top:25px;width:1px;height:19px;background:#b8b8b8;"></div><svg class="a" style="left:1066px;top:27px;" width="16" height="16" viewBox="0 0 16 16"><path d="M3.5 7.5Q8 1.5 12 5.5Q14.5 9 10.5 12" fill="none" stroke="#a6a6a6" stroke-width="1.5"/><path d="M1 4.2L1.6 10.5L7.2 8.8Z" fill="#a6a6a6"/></svg><svg class="a" style="left:1088px;top:27px;" width="16" height="16" viewBox="0 0 16 16"><path d="M12.5 7.5Q8 1.5 4 5.5Q1.5 9 5.5 12" fill="none" stroke="#a6a6a6" stroke-width="1.5"/><path d="M15 4.2L14.4 10.5L8.8 8.8Z" fill="#a6a6a6"/></svg><svg class="a" style="left:1111px;top:26px;" width="16" height="16" viewBox="0 0 16 16"><path d="M5.5 0.5L9.3 9.5M10.5 0.5L6.7 9.5" stroke="#a6a6a6" stroke-width="1.3" fill="none"/><circle cx="5" cy="12.5" r="2.1" fill="none" stroke="#a6a6a6" stroke-width="1.2"/><circle cx="11" cy="12.5" r="2.1" fill="none" stroke="#a6a6a6" stroke-width="1.2"/></svg><svg class="a" style="left:1134px;top:26px;" width="16" height="16" viewBox="0 0 16 16"><path d="M1.5 1.5H6.5L8.5 3.5V10.5H1.5Z" fill="#e3e3e3" stroke="#a6a6a6"/><path d="M7.5 6.5H12.5L14.5 8.5V15.5H7.5Z" fill="#e9e9e9" stroke="#a6a6a6"/><path d="M9 10.5H13M9 12.5H13M3 5H7M3 7H7" stroke="#a6a6a6" stroke-width="0.8"/></svg><svg class="a" style="left:1157px;top:26px;" width="16" height="16" viewBox="0 0 16 16"><rect x="1" y="2.5" width="12" height="12.5" rx="1" fill="#b4b4b4" stroke="#a6a6a6"/><rect x="4.5" y="1" width="5" height="3" fill="#ddd" stroke="#a6a6a6" stroke-width="0.8"/><path d="M7.5 8.5H13.5L15.5 10.5V15.5H7.5Z" fill="#eee" stroke="#a6a6a6"/><path d="M9 11.5H13M9 13.5H13" stroke="#a6a6a6" stroke-width="0.8"/></svg><svg class="a" style="left:1180px;top:26px;" width="16" height="16" viewBox="0 0 16 16"><path d="M2 3L13.5 14M13.5 2.5L2.5 13.5" stroke="#a6a6a6" stroke-width="1.7" fill="none"/></svg><div class="a" style="left:1203px;top:25px;width:1px;height:19px;background:#b8b8b8;"></div><svg class="a" style="left:1208px;top:26px;" width="16" height="16" viewBox="0 0 16 16"><path d="M2.5 1H5.5V4L7 6V15H1V7L2.5 4ZM10.5 1H13.5V4L15 7V15H9V6L10.5 4Z" fill="#222"/><rect x="6.5" y="6" width="3" height="4" fill="#222"/><rect x="2" y="11" width="1.6" height="2.5" fill="#bbb"/><rect x="10.5" y="11" width="1.6" height="2.5" fill="#bbb"/></svg><svg class="a" style="left:1231px;top:26px;" width="18" height="16" viewBox="0 0 18 16"><path d="M0.8 7L3.3 1L5.8 7M1.8 5H4.8" fill="none" stroke="#444" stroke-width="1"/><path d="M2.5 9Q3 14 8 14" fill="none" stroke="#333" stroke-width="1.2" stroke-dasharray="1.3 1.3"/><path d="M8 11.6V16L11 13.8Z" fill="#333"/><path d="M9.5 5Q10 2 12.5 1.5" fill="none" stroke="#333" stroke-width="1.2" stroke-dasharray="1.3 1.3"/><path d="M11.5 0.3H15V3.8" fill="none" stroke="#333" stroke-width="1.1"/><text x="11.5" y="15.5" font-family="Liberation Sans,sans-serif" font-size="7" fill="#555">B</text></svg><svg class="a" style="left:1254px;top:26px;" width="17" height="16" viewBox="0 0 17 16"><path d="M2.5 1H5.5V4L7 6V15H1V7L2.5 4ZM10.5 1H13.5V4L15 7V15H9V6L10.5 4Z" fill="#222"/><rect x="6.5" y="6" width="3" height="4" fill="#222"/><rect x="2" y="11" width="1.6" height="2.5" fill="#bbb"/><rect x="10.5" y="11" width="1.6" height="2.5" fill="#bbb"/><rect x="7.5" y="9" width="9" height="6.5" rx="0.8" fill="#f2c24a" stroke="#9a6a12" stroke-width="0.7"/><rect x="8.3" y="12" width="7.4" height="3" fill="#e8a735"/></svg><svg class="a" style="left:1277px;top:26px;" width="18" height="16" viewBox="0 0 18 16"><path d="M0.8 7L3.3 1L5.8 7M1.8 5H4.8" fill="none" stroke="#444" stroke-width="1"/><path d="M2.5 9Q3 14 8 14" fill="none" stroke="#333" stroke-width="1.2" stroke-dasharray="1.3 1.3"/><path d="M8 11.6V16L11 13.8Z" fill="#333"/><path d="M9.5 5Q10 2 12.5 1.5" fill="none" stroke="#333" stroke-width="1.2" stroke-dasharray="1.3 1.3"/><path d="M11.5 0.3H15V3.8" fill="none" stroke="#333" stroke-width="1.1"/><rect x="7.5" y="9" width="9" height="6.5" rx="0.8" fill="#f2c24a" stroke="#9a6a12" stroke-width="0.7"/><rect x="8.3" y="12" width="7.4" height="3" fill="#e8a735"/></svg><div class="a" style="left:1301px;top:25px;width:1px;height:19px;background:#b8b8b8;"></div><svg class="a" style="left:1309px;top:26px;" width="16" height="16" viewBox="0 0 16 16"><path d="M1 1H11V16L6 13L1 16Z" fill="#a9aba7"/></svg><svg class="a" style="left:1331px;top:26px;" width="16" height="16" viewBox="0 0 16 16"><path d="M6 5H14V16L10 13L6 16Z" fill="#a9aba7"/><path d="M9 3.5H3M5.5 1L3 3.5L5.5 6" fill="none" stroke="#a9aba7" stroke-width="1.6"/></svg><svg class="a" style="left:1353px;top:26px;" width="16" height="16" viewBox="0 0 16 16"><path d="M6 5H14V16L10 13L6 16Z" fill="#a9aba7"/><path d="M1 3.5H7.5M5 1L7.5 3.5L5 6" fill="none" stroke="#a9aba7" stroke-width="1.6"/></svg><svg class="a" style="left:1376px;top:26px;" width="16" height="16" viewBox="0 0 16 16"><path d="M6 5H14V16L10 13L6 16Z" fill="#a9aba7"/><path d="M1.5 1L8 7.5M8 1L1.5 7.5" fill="none" stroke="#a9aba7" stroke-width="1.6"/></svg><div class="a" style="left:1399px;top:25px;width:1px;height:19px;background:#b8b8b8;"></div><svg class="a" style="left:1405px;top:26px;" width="16" height="16" viewBox="0 0 16 16"><rect x="0.5" y="2.5" width="11" height="9" fill="#fff" stroke="#333"/><rect x="3" y="0.5" width="5" height="2.5" fill="#ddd" stroke="#333" stroke-width="0.8"/><path d="M2 5H5M2 7H5M2 9H5" stroke="#555" stroke-width="0.9"/><rect x="5.5" y="7.5" width="10" height="7" fill="#fff" stroke="#333"/><path d="M7.5 10H13.5M7.5 12.5H13.5" stroke="#2a3cc8" stroke-width="1.2"/></svg><div class="a" style="left:1428px;top:25px;width:1px;height:19px;background:#b8b8b8;"></div><svg class="a" style="left:1432px;top:25px;" width="18" height="17" viewBox="0 0 18 17"><rect x="3.5" y="6.5" width="13" height="9.5" fill="#fff" stroke="#444"/><path d="M6 9H7.5M9.5 9H11M13 9H14.5M6 12.5H7.5M9.5 12.5H11M13 12.5H14.5" stroke-width="1.6" stroke="#4a7a3a"/><path d="M9.5 9H11M6 12.5H7.5" stroke="#c03030" stroke-width="1.6"/><path d="M13 9H14.5M9.5 12.5H11" stroke="#3050c0" stroke-width="1.6"/><path d="M3.5 0.5V7.5M0 4H7M1 1.5L6 6.5M6 1.5L1 6.5" stroke="#e8b400" stroke-width="1"/></svg><svg class="a" style="left:1451px;top:33px;" width="7" height="4" viewBox="0 0 7 4"><path d="M0 0H6L3 3.5Z" fill="#000"/></svg><svg class="a" style="left:1463px;top:25px;" width="17" height="18" viewBox="0 0 17 18"><path d="M1.5 5.5H8.5L10.5 7.5V16.5H1.5Z" fill="#fff" stroke="#333"/><path d="M9 3.5Q12 0 14.5 3.5" fill="none" stroke="#333" stroke-width="1"/><path d="M15.5 1.5V5H12Z" fill="#333"/></svg><div class="a" style="left:1486px;top:25px;width:1px;height:19px;background:#b8b8b8;"></div><svg class="a" style="left:1491px;top:25px;" width="17" height="17" viewBox="0 0 17 17"><path d="M1.5 7V15.5H15.5V7" fill="none" stroke="#333"/><path d="M3 9.5H14M3 11.5H14M3 13.5H14" stroke="#333" stroke-width="1" stroke-dasharray="1 1"/><path d="M1 1.5H16" stroke="#2a3cc8" stroke-width="1" stroke-dasharray="1 1"/><path d="M5.5 2V6M11.5 2V6" stroke="#2a2a9c" stroke-width="1.2"/><path d="M3 5L5.5 8L8 5ZM9 5L11.5 8L14 5Z" fill="#2a2a9c"/></svg><div class="a" style="left:1515px;top:25px;width:1px;height:19px;background:#b8b8b8;"></div><svg class="a" style="left:1805px;top:25px;" width="18" height="18" viewBox="0 0 18 18"><circle cx="6.5" cy="7" r="3.5" fill="none" stroke="#c3c5c6" stroke-width="2.6"/><circle cx="6.5" cy="7" r="5.2" fill="none" stroke="#c3c5c6" stroke-width="1.4" stroke-dasharray="1.4 1.32"/><rect x="12" y="3" width="4" height="3.5" rx="1" fill="#c6c8c9"/><rect x="12" y="8.5" width="4" height="2.5" fill="#d8d8d8"/><path d="M10 13.5L12 15.5L15.5 12" fill="none" stroke="#c0c0c0" stroke-width="1"/></svg><svg class="a" style="left:1828px;top:25px;" width="18" height="18" viewBox="0 0 18 18"><circle cx="7" cy="7" r="3.5" fill="none" stroke="#8f9294" stroke-width="2.6"/><circle cx="7" cy="7" r="5.2" fill="none" stroke="#8f9294" stroke-width="1.4" stroke-dasharray="1.4 1.32"/><path d="M10.5 1L15.5 6M15.5 1L10.5 6" stroke="#f00" stroke-width="1.8"/><rect x="12" y="8.5" width="4" height="2.5" fill="#eee"/><rect x="13" y="11" width="3" height="3" fill="#444"/><path d="M10.5 13.5L12.5 15.5" stroke="#333" stroke-width="1"/></svg>
<div class="a" style="left:1519px;top:23px;width:283px;height:23px;background:#fff;"></div>
<div class="a" style="left:1523px;top:25.54px;line-height:17px;font-size:12px;letter-spacing:-0.046px;">Application [Device: PLC Logic]</div>
<svg class="a" style="left:1791px;top:32px;" width="8" height="5" viewBox="0 0 8 5"><path d="M0 0H7L3.5 4Z" fill="#000"/></svg>
<div class="a" style="left:1849px;top:23px;width:23px;height:22px;background:#b9d7f3;border:1px solid #3a95e8"></div>
<svg class="a" style="left:1861px;top:32px;" width="6" height="10" viewBox="0 0 6 10"><path d="M0.5 0L5.8 4.8L0.5 9.6Z" fill="#3a2f9c"/></svg>
<div class="a" style="left:1882px;top:33px;width:9px;height:9px;background:#a9a9a9;"></div>
<svg class="a" style="left:1857px;top:37px;" width="14" height="21" viewBox="0 0 14 21"><path d="M1.5 1.3V16.4L5 13.1L7.6 19.2L9.9 18.2L7.3 12.2H12.3Z" fill="#fff" stroke="#000" stroke-width="1" stroke-linejoin="miter"/></svg>
<svg class="a" style="left:1887px;top:3px;" width="15" height="15" viewBox="0 0 15 15"><path d="M0 0H14L7.6 7L9.4 14.2H6.8L3.8 7Z" fill="#464646"/></svg>
<div class="a" style="left:959px;top:74px;width:19px;height:67px;background:#f4f4f3;border:1px solid #8c8c8c;border-left:none;border-radius:0 4px 0 0"></div>
<div class="a" style="left:959px;top:142px;width:19px;height:56px;background:#f4f4f3;border:1px solid #8c8c8c;border-left:none;border-radius:0 4px 0 0"></div>
<div class="a" style="left:0px;top:-11.14px;line-height:15px;font-size:10.5px;letter-spacing:0.220px;color:#5a5a5a;left:959.5px;top:99.6px;transform-origin:0 0;transform:translate(14px,0) rotate(90deg);line-height:14px;">Devices</div>
<div class="a" style="left:0px;top:-11.14px;line-height:15px;font-size:10.5px;letter-spacing:-0.504px;color:#5a5a5a;left:959.5px;top:168px;transform-origin:0 0;transform:translate(14px,0) rotate(90deg);line-height:14px;">POUs</div>
<svg class="a" style="left:959px;top:77px;" width="17" height="16" viewBox="0 0 17 16"><ellipse cx="10.5" cy="8" rx="5" ry="7.3" fill="#b9b9b9" stroke="#808080" stroke-width="0.8"/><ellipse cx="12" cy="7" rx="2.6" ry="4.6" fill="#efefef"/><path d="M5 8L11 2.5M5 8L11 13.5M5 8H12" stroke="#555" stroke-width="0.9"/><rect x="2.2" y="0.8" width="2.2" height="14.5" fill="#2a2a2a"/><rect x="1" y="5" width="4.6" height="4.6" fill="#f0a020" stroke="#a86a10" stroke-width="0.6"/></svg>
<svg class="a" style="left:959px;top:146px;" width="17" height="15" viewBox="0 0 17 15"><rect x="4.5" y="0.8" width="10" height="9" fill="#fff" stroke="#888" stroke-width="0.9"/><path d="M1 4H12.5V9L9 12.8H1Z" fill="#eaf3fb" stroke="#555" stroke-width="1"/><path d="M3 5V12M5 5V12M7 5V12M9 5V12M11 5V10" stroke="#9ec4e8" stroke-width="0.9"/><path d="M9 12.8L12.5 9L14.8 9.8L10 14Z" fill="#2a62c8"/><path d="M1 13.2H9.5" stroke="#333" stroke-width="1.2"/></svg>
<div class="a" style="left:1896px;top:74px;width:12px;height:70px;background:#f4f4f3;border:1px solid #8c8c8c;border-radius:3px 0 0 3px"></div>
<div class="a" style="left:1896px;top:157px;width:12px;height:82px;background:#f4f4f3;border:1px solid #8c8c8c;border-radius:3px 0 0 3px"></div>
<div class="a" style="left:0px;top:-11.14px;line-height:15px;font-size:10.5px;letter-spacing:0.400px;color:#5a5a5a;left:1900px;top:101px;transform-origin:0 0;transform:translate(14px,0) rotate(90deg);line-height:14px;">Toolbox</div>
<div class="a" style="left:0px;top:-11.14px;line-height:15px;font-size:10.5px;letter-spacing:0.314px;color:#5a5a5a;left:1900px;top:181px;transform-origin:0 0;transform:translate(14px,0) rotate(90deg);line-height:14px;">Properties</div>
<svg class="a" style="left:1898px;top:78px;" width="8" height="10" viewBox="0 0 8 10"><path d="M1 1L7 5L1 9" fill="none" stroke="#833" stroke-width="1.2"/></svg>
<div class="a" style="left:1898px;top:159px;width:8px;height:10px;background:#fff;border:2px solid #222;border-right:none"></div>
<div class="a" style="left:1902px;top:161px;width:1px;height:6px;background:#222;"></div>
<div class="a" style="left:1897px;top:169px;width:9px;height:3px;background:#8a8a8a;"></div>
<div class="a" style="left:980px;top:72px;width:914px;height:771px;background:#fff;border:1px solid #8e8e8e"></div>
<div class="a" style="left:981px;top:73px;width:912px;height:20px;background:#f0f0f0;border-bottom:1px solid #9a9a9a"></div>
<svg class="a" style="left:981px;top:73px;" width="240" height="21" viewBox="0 0 240 21"><path d="M4 19.5L19 4.5Q20 3.5 22 3.5H131Q134.5 3.5 135 6L122 19.5Z" fill="#f4f4f4"/><path d="M4 19.5L19 4.5Q20 3.5 22 3.5H131Q134.5 3.5 135.5 6L137.5 7" fill="none" stroke="#8e8e8e" stroke-width="1"/><path d="M124.5 20L139.5 4.5Q141 2.5 144 2.5H220Q224.5 2.5 225 6.5V20Z" fill="#fdfdfd" stroke="#8e8e8e" stroke-width="1"/><path d="M125 20.5H225.5" stroke="#fdfdfd" stroke-width="2"/></svg>
<svg class="a" style="left:1001px;top:77px;" width="14" height="16" viewBox="0 0 14 16"><path d="M1 1H9L12.5 4.5V15H1Z" fill="#fff" stroke="#333" stroke-width="1.2"/><path d="M9 1V4.5H12.5" fill="none" stroke="#333" stroke-width="1"/><path d="M3 6.5H9.5M3 8.5H9.5M3 10.5H9.5M3 12.5H9.5" stroke="#1a1aff" stroke-width="1.1"/></svg>
<svg class="a" style="left:1123px;top:77px;" width="15" height="16" viewBox="0 0 15 16"><path d="M1.5 3.5L4.5 1H13.5V13L10.5 15.5H1.5Z" fill="#c9c9c9" stroke="#555" stroke-width="1"/><path d="M1.5 3.5H10.5V15.5M10.5 3.5L13.5 1" fill="none" stroke="#555" stroke-width="1"/><path d="M6 3.5V15.5" stroke="#777" stroke-width="1"/><rect x="3" y="5.5" width="1.6" height="1.6" fill="#0a0"/><rect x="7.5" y="5.5" width="1.6" height="1.6" fill="#d00"/></svg>
<div class="a" style="left:1027px;top:76.69px;line-height:15px;font-size:11px;letter-spacing:-0.298px;">Example_ST</div>
<div class="a" style="left:1144px;top:76.69px;line-height:15px;font-size:11px;letter-spacing:0.419px;font-weight:bold;">Device</div>
<svg class="a" style="left:1191px;top:80px;" width="10" height="10" viewBox="0 0 10 10"><path d="M1.5 1.5L8.5 8.5M8.5 1.5L1.5 8.5" stroke="#000" stroke-width="2.2"/></svg>
<svg class="a" style="left:1880px;top:83px;" width="9" height="5" viewBox="0 0 9 5"><path d="M0 0H8L4 4.5Z" fill="#000"/></svg>
<svg class="a" style="left:987px;top:100px;" width="203" height="535" viewBox="0 0 203 535"><path d="M0 0H202V533L0 502.4Z" fill="#f0f0f0"/><path d="M0.5 0V502.4L200 532.8" fill="none" stroke="#a0a0a0" stroke-width="1"/></svg>
<div class="a" style="left:987px;top:100px;width:901px;height:1px;background:#a0a0a0;"></div>
<div class="a" style="left:1188px;top:100px;width:1px;height:720px;background:#8c8c8c;"></div>
<div class="a" style="left:1186px;top:632px;width:1px;height:189px;background:#9a9a9a;"></div>
<div class="a" style="left:1189px;top:102px;width:700px;height:1px;background:#a0a0a0;"></div>
<div class="a" style="left:1188px;top:818px;width:701px;height:1px;background:#a0a0a0;"></div>
<div class="a" style="left:1186px;top:820px;width:703px;height:1px;background:#a0a0a0;"></div>
<div class="a" style="left:988px;top:101px;width:3px;height:34px;background:#62b0f2;"></div>
<div class="a" style="left:1013px;top:137px;width:149px;height:1px;background:#fbfbfb;"></div>
<div class="a" style="left:998px;top:111.69px;line-height:15px;font-size:11px;letter-spacing:0.126px;">Communication Settings</div>
<div class="a" style="left:988px;top:136px;width:3px;height:34px;background:#62b0f2;"></div>
<div class="a" style="left:1013px;top:172px;width:149px;height:1px;background:#fbfbfb;"></div>
<div class="a" style="left:998px;top:146.69px;line-height:15px;font-size:11px;letter-spacing:0.139px;">Applications</div>
<div class="a" style="left:988px;top:171px;width:3px;height:34px;background:#62b0f2;"></div>
<div class="a" style="left:1013px;top:207px;width:149px;height:1px;background:#fbfbfb;"></div>
<div class="a" style="left:998px;top:181.69px;line-height:15px;font-size:11px;letter-spacing:0.129px;">Backup and Restore</div>
<div class="a" style="left:988px;top:206px;width:3px;height:34px;background:#62b0f2;"></div>
<div class="a" style="left:1013px;top:242px;width:149px;height:1px;background:#fbfbfb;"></div>
<div class="a" style="left:998px;top:216.69px;line-height:15px;font-size:11px;letter-spacing:-0.047px;">Files</div>
<div class="a" style="left:988px;top:242px;width:201px;height:36px;background:#fff;border-top:1px solid #a0a0a0;border-bottom:1px solid #a0a0a0"></div>
<div class="a" style="left:988px;top:242px;width:3px;height:35px;background:#0a5fc0;"></div>
<div class="a" style="left:998px;top:251.69px;line-height:15px;font-size:11px;letter-spacing:0.214px;">Log</div>
<div class="a" style="left:988px;top:276px;width:3px;height:34px;background:#62b0f2;"></div>
<div class="a" style="left:1013px;top:312px;width:149px;height:1px;background:#fbfbfb;"></div>
<div class="a" style="left:998px;top:286.69px;line-height:15px;font-size:11px;letter-spacing:-0.100px;">PLC Settings</div>
<div class="a" style="left:988px;top:311px;width:3px;height:34px;background:#62b0f2;"></div>
<div class="a" style="left:1013px;top:347px;width:149px;height:1px;background:#fbfbfb;"></div>
<div class="a" style="left:998px;top:321.69px;line-height:15px;font-size:11px;letter-spacing:-0.325px;">PLC Shell</div>
<div class="a" style="left:988px;top:346px;width:3px;height:34px;background:#62b0f2;"></div>
<div class="a" style="left:1013px;top:382px;width:149px;height:1px;background:#fbfbfb;"></div>
<div class="a" style="left:998px;top:356.69px;line-height:15px;font-size:11px;letter-spacing:0.046px;">Users and Groups</div>
<div class="a" style="left:988px;top:381px;width:3px;height:34px;background:#62b0f2;"></div>
<div class="a" style="left:1013px;top:417px;width:149px;height:1px;background:#fbfbfb;"></div>
<div class="a" style="left:998px;top:391.69px;line-height:15px;font-size:11px;letter-spacing:-0.054px;">Access Rights</div>
<div class="a" style="left:988px;top:416px;width:3px;height:34px;background:#62b0f2;"></div>
<div class="a" style="left:1013px;top:452px;width:149px;height:1px;background:#fbfbfb;"></div>
<div class="a" style="left:998px;top:426.69px;line-height:15px;font-size:11px;letter-spacing:0.083px;">Symbol Rights</div>
<div class="a" style="left:988px;top:451px;width:3px;height:34px;background:#62b0f2;"></div>
<div class="a" style="left:1013px;top:487px;width:149px;height:1px;background:#fbfbfb;"></div>
<div class="a" style="left:998px;top:461.69px;line-height:15px;font-size:11px;letter-spacing:-0.062px;">IEC Objects</div>
<div class="a" style="left:988px;top:486px;width:3px;height:34px;background:#62b0f2;"></div>
<div class="a" style="left:1013px;top:522px;width:149px;height:1px;background:#fbfbfb;"></div>
<div class="a" style="left:998px;top:496.69px;line-height:15px;font-size:11px;letter-spacing:0.308px;">Task Deployment</div>
<div class="a" style="left:988px;top:521px;width:3px;height:34px;background:#62b0f2;"></div>
<div class="a" style="left:1013px;top:557px;width:149px;height:1px;background:#fbfbfb;"></div>
<div class="a" style="left:998px;top:531.69px;line-height:15px;font-size:11px;letter-spacing:-0.031px;">Status</div>
<div class="a" style="left:988px;top:556px;width:3px;height:34px;background:#62b0f2;"></div>
<div class="a" style="left:1013px;top:592px;width:149px;height:1px;background:#fbfbfb;"></div>
<div class="a" style="left:998px;top:566.69px;line-height:15px;font-size:11px;letter-spacing:0.361px;">Information</div>
<div class="a" style="left:1190px;top:104px;width:698px;height:25px;background:linear-gradient(#fbfbfa 0,#f3f3ef 60%,#d9d9c8 100%);"></div>
<div class="a" style="left:1190px;top:105px;width:87px;height:23px;background:#e6eaf4;border:1px solid #3a78d4"></div>
<div class="a" style="left:1277px;top:105px;width:73px;height:23px;background:#e6eaf4;border:1px solid #3a78d4"></div>
<div class="a" style="left:1350px;top:105px;width:96px;height:23px;background:#e6eaf4;border:1px solid #3a78d4"></div>
<div class="a" style="left:1446px;top:105px;width:109px;height:23px;background:#e6eaf4;border:1px solid #3a78d4"></div>
<div class="a" style="left:1191px;top:128px;width:697px;height:1px;background:#8f8f8a;"></div>
<div class="a" style="left:1210px;top:108.69px;line-height:15px;font-size:11px;letter-spacing:-0.044px;">0 warning(s)</div>
<div class="a" style="left:1297px;top:108.69px;line-height:15px;font-size:11px;letter-spacing:0.077px;">0 error(s)</div>
<div class="a" style="left:1370px;top:108.69px;line-height:15px;font-size:11px;letter-spacing:-0.007px;">0 exception(s)</div>
<div class="a" style="left:1467px;top:108.69px;line-height:15px;font-size:11px;letter-spacing:-0.091px;">30 information(s)</div>
<div class="a" style="left:1575px;top:108.69px;line-height:15px;font-size:11px;letter-spacing:-0.182px;">0 debug message(s)</div>
<svg class="a" style="left:1193px;top:109px;" width="14" height="14" viewBox="0 0 14 14"><circle cx="7" cy="7" r="6" fill="#ffd91a" stroke="#a08a10" stroke-width="1"/><rect x="6.2" y="3" width="1.8" height="5" fill="#222"/><rect x="6.2" y="9.2" width="1.8" height="1.8" fill="#222"/></svg><svg class="a" style="left:1281px;top:110px;" width="12" height="12" viewBox="0 0 12 12"><circle cx="6" cy="6" r="5.5" fill="#e01010"/><path d="M3.6 3.6L8.4 8.4M8.4 3.6L3.6 8.4" stroke="#fff" stroke-width="1.8"/></svg><svg class="a" style="left:1353px;top:109px;" width="14" height="14" viewBox="0 0 14 14"><circle cx="7" cy="7" r="6" fill="#ffd91a" stroke="#d09010" stroke-width="1"/><path d="M5 3.6H9.3M5 7H8.8M5 10.4H9.3M5.4 3V11" stroke="#e01010" stroke-width="1.5" fill="none"/></svg><svg class="a" style="left:1449px;top:110px;" width="12" height="12" viewBox="0 0 12 12"><circle cx="6" cy="6" r="5.6" fill="#0a10dc"/><circle cx="6" cy="3.2" r="1.1" fill="#fff"/><path d="M4.3 5H6.9V8.6H7.8V9.6H4.3V8.6H5.2V6H4.3Z" fill="#fff"/></svg><svg class="a" style="left:1558px;top:109px;" width="14" height="14" viewBox="0 0 14 14"><circle cx="7" cy="7" r="5.3" fill="#e4e4e4" stroke="#6e6e6e" stroke-width="2.4"/><path d="M5.2 4.2H7Q9.4 4.2 9.4 7Q9.4 9.8 7 9.8H5.2Z" fill="none" stroke="#9a9a9a" stroke-width="1.3"/></svg>
<div class="a" style="left:1680px;top:106px;width:198px;height:21px;background:#fff;"></div>
<div class="a" style="left:1868px;top:106px;width:11px;height:21px;background:#ececec;"></div>
<svg class="a" style="left:1870px;top:115px;" width="7" height="4" viewBox="0 0 7 4"><path d="M0 0H6L3 3.5Z" fill="#000"/></svg>
<div class="a" style="left:1685px;top:109.69px;line-height:15px;font-size:11px;letter-spacing:-0.129px;">&lt;All components&gt;</div>
<div class="a" style="left:1883px;top:107px;width:1px;height:20px;background:#b5b5a5;"></div>
<div class="a" style="left:1884px;top:107px;width:1px;height:20px;background:#fff;"></div>
<div class="a" style="left:1196px;top:137px;width:13px;height:13px;background:#fff;border:1px solid #333"></div>
<div class="a" style="left:1213px;top:135.69px;line-height:15px;font-size:11px;letter-spacing:0.325px;">Offline logging</div>
<div class="a" style="left:1298px;top:137px;width:13px;height:13px;background:#fff;border:1px solid #333"></div>
<div class="a" style="left:1315px;top:135.69px;line-height:15px;font-size:11px;letter-spacing:-0.057px;">UTC time</div>
<div class="a" style="left:1193px;top:158px;width:695px;height:655px;background:#fff;border:1px solid #828790;border-right:none"></div>
<div class="a" style="left:1201px;top:164.69px;line-height:15px;font-size:11px;letter-spacing:0.156px;">Severity</div>
<div class="a" style="left:1260px;top:164.69px;line-height:15px;font-size:11px;letter-spacing:0.411px;">Time Stamp</div>
<div class="a" style="left:1379px;top:164.69px;line-height:15px;font-size:11px;letter-spacing:0.452px;">Description</div>
<div class="a" style="left:1738px;top:164.69px;line-height:15px;font-size:11px;letter-spacing:0.681px;">Component</div>
<div class="a" style="left:1253px;top:160px;width:1px;height:24px;background:#e5e5e5;"></div>
<div class="a" style="left:1372px;top:160px;width:1px;height:24px;background:#e5e5e5;"></div>
<div class="a" style="left:1730px;top:160px;width:1px;height:24px;background:#e5e5e5;"></div>
<div class="a" style="left:1195px;top:203px;width:694px;height:1px;background:#e3e3e3;"></div>
<svg class="a" style="left:1222px;top:187px;" width="12" height="12" viewBox="0 0 12 12"><circle cx="6" cy="6" r="5.6" fill="#0a10dc"/><circle cx="6" cy="3.2" r="1.1" fill="#fff"/><path d="M4.3 5H6.9V8.6H7.8V9.6H4.3V8.6H5.2V6H4.3Z" fill="#fff"/></svg>
<div class="a" style="left:1259px;top:186.69px;line-height:15px;font-size:11px;letter-spacing:0.109px;">20.12.2020 00:33:04</div>
<div class="a" style="left:1378px;top:187.53px;line-height:14px;font-size:10px;letter-spacing:0.007px;font-family:'DejaVu Sans',sans-serif;">########################################...</div>
<div class="a" style="left:1735px;top:186.69px;line-height:15px;font-size:11px;letter-spacing:-0.388px;">SparkplugB</div>
<div class="a" style="left:1195px;top:222px;width:694px;height:1px;background:#e3e3e3;"></div>
<svg class="a" style="left:1222px;top:206px;" width="12" height="12" viewBox="0 0 12 12"><circle cx="6" cy="6" r="5.6" fill="#0a10dc"/><circle cx="6" cy="3.2" r="1.1" fill="#fff"/><path d="M4.3 5H6.9V8.6H7.8V9.6H4.3V8.6H5.2V6H4.3Z" fill="#fff"/></svg>
<div class="a" style="left:1259px;top:205.69px;line-height:15px;font-size:11px;letter-spacing:0.109px;">20.12.2020 00:33:04</div>
<div class="a" style="left:1377px;top:205.69px;line-height:15px;font-size:11px;letter-spacing:-0.162px;">SparkplugB Device Initialised: Device.Application.Example_ST.MyDevice3</div>
<div class="a" style="left:1735px;top:205.69px;line-height:15px;font-size:11px;letter-spacing:-0.388px;">SparkplugB</div>
<div class="a" style="left:1195px;top:241px;width:694px;height:1px;background:#e3e3e3;"></div>
<svg class="a" style="left:1222px;top:225px;" width="12" height="12" viewBox="0 0 12 12"><circle cx="6" cy="6" r="5.6" fill="#0a10dc"/><circle cx="6" cy="3.2" r="1.1" fill="#fff"/><path d="M4.3 5H6.9V8.6H7.8V9.6H4.3V8.6H5.2V6H4.3Z" fill="#fff"/></svg>
<div class="a" style="left:1259px;top:224.69px;line-height:15px;font-size:11px;letter-spacing:0.109px;">20.12.2020 00:33:04</div>
<div class="a" style="left:1378px;top:225.53px;line-height:14px;font-size:10px;letter-spacing:0.007px;font-family:'DejaVu Sans',sans-serif;">########################################...</div>
<div class="a" style="left:1735px;top:224.69px;line-height:15px;font-size:11px;letter-spacing:-0.388px;">SparkplugB</div>
<div class="a" style="left:1195px;top:260px;width:694px;height:1px;background:#e3e3e3;"></div>
<svg class="a" style="left:1222px;top:244px;" width="12" height="12" viewBox="0 0 12 12"><circle cx="6" cy="6" r="5.6" fill="#0a10dc"/><circle cx="6" cy="3.2" r="1.1" fill="#fff"/><path d="M4.3 5H6.9V8.6H7.8V9.6H4.3V8.6H5.2V6H4.3Z" fill="#fff"/></svg>
<div class="a" style="left:1259px;top:243.69px;line-height:15px;font-size:11px;letter-spacing:0.109px;">20.12.2020 00:33:04</div>
<div class="a" style="left:1377px;top:243.69px;line-height:15px;font-size:11px;letter-spacing:-0.620px;">Device.UNPLUGGED.OFFLINE</div>
<div class="a" style="left:1735px;top:243.69px;line-height:15px;font-size:11px;letter-spacing:-0.388px;">SparkplugB</div>
<div class="a" style="left:1195px;top:279px;width:694px;height:1px;background:#e3e3e3;"></div>
<svg class="a" style="left:1222px;top:263px;" width="12" height="12" viewBox="0 0 12 12"><circle cx="6" cy="6" r="5.6" fill="#0a10dc"/><circle cx="6" cy="3.2" r="1.1" fill="#fff"/><path d="M4.3 5H6.9V8.6H7.8V9.6H4.3V8.6H5.2V6H4.3Z" fill="#fff"/></svg>
<div class="a" style="left:1259px;top:262.69px;line-height:15px;font-size:11px;letter-spacing:0.109px;">20.12.2020 00:33:04</div>
<div class="a" style="left:1377px;top:262.69px;line-height:15px;font-size:11px;letter-spacing:-0.255px;">SparkplugBSimple Protobuf Decoder.IDLE</div>
<div class="a" style="left:1735px;top:262.69px;line-height:15px;font-size:11px;letter-spacing:-0.388px;">SparkplugB</div>
<div class="a" style="left:1195px;top:298px;width:694px;height:1px;background:#e3e3e3;"></div>
<svg class="a" style="left:1222px;top:282px;" width="12" height="12" viewBox="0 0 12 12"><circle cx="6" cy="6" r="5.6" fill="#0a10dc"/><circle cx="6" cy="3.2" r="1.1" fill="#fff"/><path d="M4.3 5H6.9V8.6H7.8V9.6H4.3V8.6H5.2V6H4.3Z" fill="#fff"/></svg>
<div class="a" style="left:1259px;top:281.69px;line-height:15px;font-size:11px;letter-spacing:0.109px;">20.12.2020 00:33:04</div>
<div class="a" style="left:1377px;top:281.69px;line-height:15px;font-size:11px;letter-spacing:-0.238px;">SparkplugBSimple Protobuf Encoder.IDLE</div>
<div class="a" style="left:1735px;top:281.69px;line-height:15px;font-size:11px;letter-spacing:-0.388px;">SparkplugB</div>
<div class="a" style="left:1195px;top:317px;width:694px;height:1px;background:#e3e3e3;"></div>
<svg class="a" style="left:1222px;top:301px;" width="12" height="12" viewBox="0 0 12 12"><circle cx="6" cy="6" r="5.6" fill="#0a10dc"/><circle cx="6" cy="3.2" r="1.1" fill="#fff"/><path d="M4.3 5H6.9V8.6H7.8V9.6H4.3V8.6H5.2V6H4.3Z" fill="#fff"/></svg>
<div class="a" style="left:1259px;top:300.69px;line-height:15px;font-size:11px;letter-spacing:0.109px;">20.12.2020 00:33:04</div>
<div class="a" style="left:1378px;top:301.54px;line-height:14px;font-size:10px;letter-spacing:0.007px;font-family:'DejaVu Sans',sans-serif;">########################################...</div>
<div class="a" style="left:1735px;top:300.69px;line-height:15px;font-size:11px;letter-spacing:-0.388px;">SparkplugB</div>
<div class="a" style="left:1195px;top:336px;width:694px;height:1px;background:#e3e3e3;"></div>
<svg class="a" style="left:1222px;top:320px;" width="12" height="12" viewBox="0 0 12 12"><circle cx="6" cy="6" r="5.6" fill="#0a10dc"/><circle cx="6" cy="3.2" r="1.1" fill="#fff"/><path d="M4.3 5H6.9V8.6H7.8V9.6H4.3V8.6H5.2V6H4.3Z" fill="#fff"/></svg>
<div class="a" style="left:1259px;top:319.69px;line-height:15px;font-size:11px;letter-spacing:0.109px;">20.12.2020 00:33:04</div>
<div class="a" style="left:1377px;top:319.69px;line-height:15px;font-size:11px;letter-spacing:-0.162px;">SparkplugB Device Initialised: Device.Application.Example_ST.MyDevice2</div>
<div class="a" style="left:1735px;top:319.69px;line-height:15px;font-size:11px;letter-spacing:-0.388px;">SparkplugB</div>
<div class="a" style="left:1195px;top:355px;width:694px;height:1px;background:#e3e3e3;"></div>
<svg class="a" style="left:1222px;top:339px;" width="12" height="12" viewBox="0 0 12 12"><circle cx="6" cy="6" r="5.6" fill="#0a10dc"/><circle cx="6" cy="3.2" r="1.1" fill="#fff"/><path d="M4.3 5H6.9V8.6H7.8V9.6H4.3V8.6H5.2V6H4.3Z" fill="#fff"/></svg>
<div class="a" style="left:1259px;top:338.69px;line-height:15px;font-size:11px;letter-spacing:0.109px;">20.12.2020 00:33:04</div>
<div class="a" style="left:1378px;top:339.54px;line-height:14px;font-size:10px;letter-spacing:0.007px;font-family:'DejaVu Sans',sans-serif;">########################################...</div>
<div class="a" style="left:1735px;top:338.69px;line-height:15px;font-size:11px;letter-spacing:-0.388px;">SparkplugB</div>
<div class="a" style="left:1195px;top:374px;width:694px;height:1px;background:#e3e3e3;"></div>
<svg class="a" style="left:1222px;top:358px;" width="12" height="12" viewBox="0 0 12 12"><circle cx="6" cy="6" r="5.6" fill="#0a10dc"/><circle cx="6" cy="3.2" r="1.1" fill="#fff"/><path d="M4.3 5H6.9V8.6H7.8V9.6H4.3V8.6H5.2V6H4.3Z" fill="#fff"/></svg>
<div class="a" style="left:1259px;top:357.69px;line-height:15px;font-size:11px;letter-spacing:0.109px;">20.12.2020 00:33:04</div>
<div class="a" style="left:1377px;top:357.69px;line-height:15px;font-size:11px;letter-spacing:-0.620px;">Device.UNPLUGGED.OFFLINE</div>
<div class="a" style="left:1735px;top:357.69px;line-height:15px;font-size:11px;letter-spacing:-0.388px;">SparkplugB</div>
<div class="a" style="left:1195px;top:393px;width:694px;height:1px;background:#e3e3e3;"></div>
<svg class="a" style="left:1222px;top:377px;" width="12" height="12" viewBox="0 0 12 12"><circle cx="6" cy="6" r="5.6" fill="#0a10dc"/><circle cx="6" cy="3.2" r="1.1" fill="#fff"/><path d="M4.3 5H6.9V8.6H7.8V9.6H4.3V8.6H5.2V6H4.3Z" fill="#fff"/></svg>
<div class="a" style="left:1259px;top:376.69px;line-height:15px;font-size:11px;letter-spacing:0.109px;">20.12.2020 00:33:04</div>
<div class="a" style="left:1377px;top:376.69px;line-height:15px;font-size:11px;letter-spacing:-0.255px;">SparkplugBSimple Protobuf Decoder.IDLE</div>
<div class="a" style="left:1735px;top:376.69px;line-height:15px;font-size:11px;letter-spacing:-0.388px;">SparkplugB</div>
<div class="a" style="left:1195px;top:412px;width:694px;height:1px;background:#e3e3e3;"></div>
<svg class="a" style="left:1222px;top:396px;" width="12" height="12" viewBox="0 0 12 12"><circle cx="6" cy="6" r="5.6" fill="#0a10dc"/><circle cx="6" cy="3.2" r="1.1" fill="#fff"/><path d="M4.3 5H6.9V8.6H7.8V9.6H4.3V8.6H5.2V6H4.3Z" fill="#fff"/></svg>
<div class="a" style="left:1259px;top:395.69px;line-height:15px;font-size:11px;letter-spacing:0.109px;">20.12.2020 00:33:04</div>
<div class="a" style="left:1377px;top:395.69px;line-height:15px;font-size:11px;letter-spacing:-0.238px;">SparkplugBSimple Protobuf Encoder.IDLE</div>
<div class="a" style="left:1735px;top:395.69px;line-height:15px;font-size:11px;letter-spacing:-0.388px;">SparkplugB</div>
<div class="a" style="left:1195px;top:431px;width:694px;height:1px;background:#e3e3e3;"></div>
<svg class="a" style="left:1222px;top:415px;" width="12" height="12" viewBox="0 0 12 12"><circle cx="6" cy="6" r="5.6" fill="#0a10dc"/><circle cx="6" cy="3.2" r="1.1" fill="#fff"/><path d="M4.3 5H6.9V8.6H7.8V9.6H4.3V8.6H5.2V6H4.3Z" fill="#fff"/></svg>
<div class="a" style="left:1259px;top:414.69px;line-height:15px;font-size:11px;letter-spacing:0.109px;">20.12.2020 00:33:04</div>
<div class="a" style="left:1378px;top:415.54px;line-height:14px;font-size:10px;letter-spacing:0.007px;font-family:'DejaVu Sans',sans-serif;">########################################...</div>
<div class="a" style="left:1735px;top:414.69px;line-height:15px;font-size:11px;letter-spacing:-0.388px;">SparkplugB</div>
<div class="a" style="left:1195px;top:450px;width:694px;height:1px;background:#e3e3e3;"></div>
<svg class="a" style="left:1222px;top:434px;" width="12" height="12" viewBox="0 0 12 12"><circle cx="6" cy="6" r="5.6" fill="#0a10dc"/><circle cx="6" cy="3.2" r="1.1" fill="#fff"/><path d="M4.3 5H6.9V8.6H7.8V9.6H4.3V8.6H5.2V6H4.3Z" fill="#fff"/></svg>
<div class="a" style="left:1259px;top:433.69px;line-height:15px;font-size:11px;letter-spacing:0.109px;">20.12.2020 00:33:04</div>
<div class="a" style="left:1377px;top:433.69px;line-height:15px;font-size:11px;letter-spacing:-0.162px;">SparkplugB Device Initialised: Device.Application.Example_ST.MyDevice1</div>
<div class="a" style="left:1735px;top:433.69px;line-height:15px;font-size:11px;letter-spacing:-0.388px;">SparkplugB</div>
<div class="a" style="left:1195px;top:469px;width:694px;height:1px;background:#e3e3e3;"></div>
<svg class="a" style="left:1222px;top:453px;" width="12" height="12" viewBox="0 0 12 12"><circle cx="6" cy="6" r="5.6" fill="#0a10dc"/><circle cx="6" cy="3.2" r="1.1" fill="#fff"/><path d="M4.3 5H6.9V8.6H7.8V9.6H4.3V8.6H5.2V6H4.3Z" fill="#fff"/></svg>
<div class="a" style="left:1259px;top:452.69px;line-height:15px;font-size:11px;letter-spacing:0.109px;">20.12.2020 00:33:04</div>
<div class="a" style="left:1378px;top:453.54px;line-height:14px;font-size:10px;letter-spacing:0.007px;font-family:'DejaVu Sans',sans-serif;">########################################...</div>
<div class="a" style="left:1735px;top:452.69px;line-height:15px;font-size:11px;letter-spacing:-0.388px;">SparkplugB</div>
<div class="a" style="left:1195px;top:488px;width:694px;height:1px;background:#e3e3e3;"></div>
<svg class="a" style="left:1222px;top:472px;" width="12" height="12" viewBox="0 0 12 12"><circle cx="6" cy="6" r="5.6" fill="#0a10dc"/><circle cx="6" cy="3.2" r="1.1" fill="#fff"/><path d="M4.3 5H6.9V8.6H7.8V9.6H4.3V8.6H5.2V6H4.3Z" fill="#fff"/></svg>
<div class="a" style="left:1259px;top:471.69px;line-height:15px;font-size:11px;letter-spacing:0.109px;">20.12.2020 00:33:04</div>
<div class="a" style="left:1377px;top:471.69px;line-height:15px;font-size:11px;letter-spacing:-0.620px;">Device.UNPLUGGED.OFFLINE</div>
<div class="a" style="left:1735px;top:471.69px;line-height:15px;font-size:11px;letter-spacing:-0.388px;">SparkplugB</div>
<div class="a" style="left:1195px;top:507px;width:694px;height:1px;background:#e3e3e3;"></div>
<svg class="a" style="left:1222px;top:491px;" width="12" height="12" viewBox="0 0 12 12"><circle cx="6" cy="6" r="5.6" fill="#0a10dc"/><circle cx="6" cy="3.2" r="1.1" fill="#fff"/><path d="M4.3 5H6.9V8.6H7.8V9.6H4.3V8.6H5.2V6H4.3Z" fill="#fff"/></svg>
<div class="a" style="left:1259px;top:490.69px;line-height:15px;font-size:11px;letter-spacing:0.109px;">20.12.2020 00:33:04</div>
<div class="a" style="left:1377px;top:490.69px;line-height:15px;font-size:11px;letter-spacing:-0.255px;">SparkplugBSimple Protobuf Decoder.IDLE</div>
<div class="a" style="left:1735px;top:490.69px;line-height:15px;font-size:11px;letter-spacing:-0.388px;">SparkplugB</div>
<div class="a" style="left:1195px;top:526px;width:694px;height:1px;background:#e3e3e3;"></div>
<svg class="a" style="left:1222px;top:510px;" width="12" height="12" viewBox="0 0 12 12"><circle cx="6" cy="6" r="5.6" fill="#0a10dc"/><circle cx="6" cy="3.2" r="1.1" fill="#fff"/><path d="M4.3 5H6.9V8.6H7.8V9.6H4.3V8.6H5.2V6H4.3Z" fill="#fff"/></svg>
<div class="a" style="left:1259px;top:509.69px;line-height:15px;font-size:11px;letter-spacing:0.109px;">20.12.2020 00:33:04</div>
<div class="a" style="left:1377px;top:509.69px;line-height:15px;font-size:11px;letter-spacing:-0.238px;">SparkplugBSimple Protobuf Encoder.IDLE</div>
<div class="a" style="left:1735px;top:509.69px;line-height:15px;font-size:11px;letter-spacing:-0.388px;">SparkplugB</div>
<div class="a" style="left:1195px;top:545px;width:694px;height:1px;background:#e3e3e3;"></div>
<svg class="a" style="left:1222px;top:529px;" width="12" height="12" viewBox="0 0 12 12"><circle cx="6" cy="6" r="5.6" fill="#0a10dc"/><circle cx="6" cy="3.2" r="1.1" fill="#fff"/><path d="M4.3 5H6.9V8.6H7.8V9.6H4.3V8.6H5.2V6H4.3Z" fill="#fff"/></svg>
<div class="a" style="left:1259px;top:528.69px;line-height:15px;font-size:11px;letter-spacing:0.109px;">20.12.2020 00:33:04</div>
<div class="a" style="left:1378px;top:529.53px;line-height:14px;font-size:10px;letter-spacing:0.007px;font-family:'DejaVu Sans',sans-serif;">########################################...</div>
<div class="a" style="left:1735px;top:528.69px;line-height:15px;font-size:11px;letter-spacing:-0.388px;">SparkplugB</div>
<div class="a" style="left:1195px;top:564px;width:694px;height:1px;background:#e3e3e3;"></div>
<svg class="a" style="left:1222px;top:548px;" width="12" height="12" viewBox="0 0 12 12"><circle cx="6" cy="6" r="5.6" fill="#0a10dc"/><circle cx="6" cy="3.2" r="1.1" fill="#fff"/><path d="M4.3 5H6.9V8.6H7.8V9.6H4.3V8.6H5.2V6H4.3Z" fill="#fff"/></svg>
<div class="a" style="left:1259px;top:547.69px;line-height:15px;font-size:11px;letter-spacing:0.109px;">20.12.2020 00:33:04</div>
<div class="a" style="left:1377px;top:547.69px;line-height:15px;font-size:11px;letter-spacing:-0.087px;">SparkplugB Library Version: 1.3.1.1</div>
<div class="a" style="left:1735px;top:547.69px;line-height:15px;font-size:11px;letter-spacing:-0.388px;">SparkplugB</div>
<div class="a" style="left:1195px;top:583px;width:694px;height:1px;background:#e3e3e3;"></div>
<svg class="a" style="left:1222px;top:567px;" width="12" height="12" viewBox="0 0 12 12"><circle cx="6" cy="6" r="5.6" fill="#0a10dc"/><circle cx="6" cy="3.2" r="1.1" fill="#fff"/><path d="M4.3 5H6.9V8.6H7.8V9.6H4.3V8.6H5.2V6H4.3Z" fill="#fff"/></svg>
<div class="a" style="left:1259px;top:566.69px;line-height:15px;font-size:11px;letter-spacing:0.109px;">20.12.2020 00:33:04</div>
<div class="a" style="left:1377px;top:566.69px;line-height:15px;font-size:11px;letter-spacing:-0.171px;">SparkplugB Library Author: H-Hermsen &amp; I-Campbell</div>
<div class="a" style="left:1735px;top:566.69px;line-height:15px;font-size:11px;letter-spacing:-0.388px;">SparkplugB</div>
<div class="a" style="left:1195px;top:602px;width:694px;height:1px;background:#e3e3e3;"></div>
<svg class="a" style="left:1222px;top:586px;" width="12" height="12" viewBox="0 0 12 12"><circle cx="6" cy="6" r="5.6" fill="#0a10dc"/><circle cx="6" cy="3.2" r="1.1" fill="#fff"/><path d="M4.3 5H6.9V8.6H7.8V9.6H4.3V8.6H5.2V6H4.3Z" fill="#fff"/></svg>
<div class="a" style="left:1259px;top:585.69px;line-height:15px;font-size:11px;letter-spacing:0.109px;">20.12.2020 00:33:04</div>
<div class="a" style="left:1377px;top:585.69px;line-height:15px;font-size:11px;letter-spacing:-0.166px;">SparkplugB Library Company: Code5 Automation</div>
<div class="a" style="left:1735px;top:585.69px;line-height:15px;font-size:11px;letter-spacing:-0.388px;">SparkplugB</div>
<div class="a" style="left:1195px;top:621px;width:694px;height:1px;background:#e3e3e3;"></div>
<svg class="a" style="left:1222px;top:605px;" width="12" height="12" viewBox="0 0 12 12"><circle cx="6" cy="6" r="5.6" fill="#0a10dc"/><circle cx="6" cy="3.2" r="1.1" fill="#fff"/><path d="M4.3 5H6.9V8.6H7.8V9.6H4.3V8.6H5.2V6H4.3Z" fill="#fff"/></svg>
<div class="a" style="left:1259px;top:604.69px;line-height:15px;font-size:11px;letter-spacing:0.109px;">20.12.2020 00:33:04</div>
<div class="a" style="left:1377px;top:604.69px;line-height:15px;font-size:11px;letter-spacing:-0.206px;">SparkplugB Library Title: SparkplugB MQTT Topic and Payload Definition</div>
<div class="a" style="left:1735px;top:604.69px;line-height:15px;font-size:11px;letter-spacing:-0.388px;">SparkplugB</div>
<div class="a" style="left:1195px;top:640px;width:694px;height:1px;background:#e3e3e3;"></div>
<svg class="a" style="left:1222px;top:624px;" width="12" height="12" viewBox="0 0 12 12"><circle cx="6" cy="6" r="5.6" fill="#0a10dc"/><circle cx="6" cy="3.2" r="1.1" fill="#fff"/><path d="M4.3 5H6.9V8.6H7.8V9.6H4.3V8.6H5.2V6H4.3Z" fill="#fff"/></svg>
<div class="a" style="left:1259px;top:623.69px;line-height:15px;font-size:11px;letter-spacing:0.109px;">20.12.2020 00:33:04</div>
<div class="a" style="left:1378px;top:624.53px;line-height:14px;font-size:10px;letter-spacing:0.007px;font-family:'DejaVu Sans',sans-serif;">########################################...</div>
<div class="a" style="left:1735px;top:623.69px;line-height:15px;font-size:11px;letter-spacing:-0.388px;">SparkplugB</div>
<div class="a" style="left:1195px;top:659px;width:694px;height:1px;background:#e3e3e3;"></div>
<svg class="a" style="left:1222px;top:643px;" width="12" height="12" viewBox="0 0 12 12"><circle cx="6" cy="6" r="5.6" fill="#0a10dc"/><circle cx="6" cy="3.2" r="1.1" fill="#fff"/><path d="M4.3 5H6.9V8.6H7.8V9.6H4.3V8.6H5.2V6H4.3Z" fill="#fff"/></svg>
<div class="a" style="left:1259px;top:642.69px;line-height:15px;font-size:11px;letter-spacing:0.109px;">20.12.2020 00:33:04</div>
<div class="a" style="left:1377px;top:642.69px;line-height:15px;font-size:11px;letter-spacing:-0.255px;">SparkplugBSimple Protobuf Decoder.IDLE</div>
<div class="a" style="left:1735px;top:642.69px;line-height:15px;font-size:11px;letter-spacing:-0.388px;">SparkplugB</div>
<div class="a" style="left:1195px;top:678px;width:694px;height:1px;background:#e3e3e3;"></div>
<svg class="a" style="left:1222px;top:662px;" width="12" height="12" viewBox="0 0 12 12"><circle cx="6" cy="6" r="5.6" fill="#0a10dc"/><circle cx="6" cy="3.2" r="1.1" fill="#fff"/><path d="M4.3 5H6.9V8.6H7.8V9.6H4.3V8.6H5.2V6H4.3Z" fill="#fff"/></svg>
<div class="a" style="left:1259px;top:661.69px;line-height:15px;font-size:11px;letter-spacing:0.109px;">20.12.2020 00:33:04</div>
<div class="a" style="left:1377px;top:661.69px;line-height:15px;font-size:11px;letter-spacing:-0.238px;">SparkplugBSimple Protobuf Encoder.IDLE</div>
<div class="a" style="left:1735px;top:661.69px;line-height:15px;font-size:11px;letter-spacing:-0.388px;">SparkplugB</div>
<div class="a" style="left:1195px;top:697px;width:694px;height:1px;background:#e3e3e3;"></div>
<svg class="a" style="left:1222px;top:681px;" width="12" height="12" viewBox="0 0 12 12"><circle cx="6" cy="6" r="5.6" fill="#0a10dc"/><circle cx="6" cy="3.2" r="1.1" fill="#fff"/><path d="M4.3 5H6.9V8.6H7.8V9.6H4.3V8.6H5.2V6H4.3Z" fill="#fff"/></svg>
<div class="a" style="left:1259px;top:680.69px;line-height:15px;font-size:11px;letter-spacing:0.109px;">20.12.2020 00:33:04</div>
<div class="a" style="left:1377px;top:680.69px;line-height:15px;font-size:11px;letter-spacing:-0.483px;">MQTT DCMD Subscriber</div>
<div class="a" style="left:1735px;top:680.69px;line-height:15px;font-size:11px;letter-spacing:-0.388px;">SparkplugB</div>
<div class="a" style="left:1195px;top:716px;width:694px;height:1px;background:#e3e3e3;"></div>
<svg class="a" style="left:1222px;top:700px;" width="12" height="12" viewBox="0 0 12 12"><circle cx="6" cy="6" r="5.6" fill="#0a10dc"/><circle cx="6" cy="3.2" r="1.1" fill="#fff"/><path d="M4.3 5H6.9V8.6H7.8V9.6H4.3V8.6H5.2V6H4.3Z" fill="#fff"/></svg>
<div class="a" style="left:1259px;top:699.69px;line-height:15px;font-size:11px;letter-spacing:0.109px;">20.12.2020 00:33:04</div>
<div class="a" style="left:1377px;top:699.69px;line-height:15px;font-size:11px;letter-spacing:-0.483px;">MQTT NCMD Subscriber</div>
<div class="a" style="left:1735px;top:699.69px;line-height:15px;font-size:11px;letter-spacing:-0.388px;">SparkplugB</div>
<div class="a" style="left:1195px;top:735px;width:694px;height:1px;background:#e3e3e3;"></div>
<svg class="a" style="left:1222px;top:719px;" width="12" height="12" viewBox="0 0 12 12"><circle cx="6" cy="6" r="5.6" fill="#0a10dc"/><circle cx="6" cy="3.2" r="1.1" fill="#fff"/><path d="M4.3 5H6.9V8.6H7.8V9.6H4.3V8.6H5.2V6H4.3Z" fill="#fff"/></svg>
<div class="a" style="left:1259px;top:718.69px;line-height:15px;font-size:11px;letter-spacing:0.109px;">20.12.2020 00:33:04</div>
<div class="a" style="left:1377px;top:718.69px;line-height:15px;font-size:11px;letter-spacing:-0.420px;">MQTT Publisher</div>
<div class="a" style="left:1735px;top:718.69px;line-height:15px;font-size:11px;letter-spacing:-0.388px;">SparkplugB</div>
<div class="a" style="left:1195px;top:754px;width:694px;height:1px;background:#e3e3e3;"></div>
<svg class="a" style="left:1222px;top:738px;" width="12" height="12" viewBox="0 0 12 12"><circle cx="6" cy="6" r="5.6" fill="#0a10dc"/><circle cx="6" cy="3.2" r="1.1" fill="#fff"/><path d="M4.3 5H6.9V8.6H7.8V9.6H4.3V8.6H5.2V6H4.3Z" fill="#fff"/></svg>
<div class="a" style="left:1259px;top:737.69px;line-height:15px;font-size:11px;letter-spacing:0.109px;">20.12.2020 00:33:04</div>
<div class="a" style="left:1377px;top:737.69px;line-height:15px;font-size:11px;letter-spacing:-0.376px;">MQTT Client</div>
<div class="a" style="left:1735px;top:737.69px;line-height:15px;font-size:11px;letter-spacing:-0.388px;">SparkplugB</div>
<div class="a" style="left:1253px;top:184px;width:1px;height:571px;background:#e3e3e3;"></div>
<div class="a" style="left:1372px;top:184px;width:1px;height:571px;background:#e3e3e3;"></div>
<div class="a" style="left:1730px;top:184px;width:1px;height:571px;background:#e3e3e3;"></div>
<div class="a" style="left:1195px;top:795px;width:692px;height:16px;background:#f0f0f0;"></div>
<div class="a" style="left:1212px;top:795px;width:675px;height:16px;background:#cdcdcd;"></div>
<svg class="a" style="left:1199px;top:799px;" width="7" height="9" viewBox="0 0 7 9"><path d="M5.5 0.8L1.5 4.5L5.5 8.2" fill="none" stroke="#555" stroke-width="1.6"/></svg>
<div class="a" style="left:987px;top:821px;width:901px;height:16px;background:#f0f0f0;"></div>
<div class="a" style="left:1003px;top:821px;width:841px;height:16px;background:#cdcdcd;"></div>
<svg class="a" style="left:990px;top:825px;" width="7" height="9" viewBox="0 0 7 9"><path d="M5.5 0.8L1.5 4.5L5.5 8.2" fill="none" stroke="#555" stroke-width="1.6"/></svg>
<svg class="a" style="left:1875px;top:825px;" width="7" height="9" viewBox="0 0 7 9"><path d="M1.5 0.8L5.5 4.5L1.5 8.2" fill="none" stroke="#555" stroke-width="1.6"/></svg>
<div class="a" style="left:980px;top:848px;width:455px;height:22px;background:#c0cfdf;"></div>
<div class="a" style="left:985px;top:851.99px;line-height:15px;font-size:11px;letter-spacing:-0.136px;">Cross Reference List</div>
<svg class="a" style="left:1378px;top:858px;" width="9" height="5" viewBox="0 0 9 5"><path d="M0 0H8L4 4.5Z" fill="#000"/></svg><svg class="a" style="left:1399px;top:853px;" width="8" height="12" viewBox="0 0 8 12"><path d="M1.5 1H6.5M2.5 1V6M5.5 1V6M0.5 6.5H7.5M4 7V11" stroke="#000" stroke-width="1.3" fill="none"/><rect x="4" y="1" width="1.5" height="5" fill="#000"/></svg><svg class="a" style="left:1418px;top:854px;" width="10" height="10" viewBox="0 0 10 10"><path d="M1.5 1.5L8.5 8.5M8.5 1.5L1.5 8.5" stroke="#000" stroke-width="2.2"/></svg>
<div class="a" style="left:986px;top:874px;width:244px;height:20px;background:#fff;border:1px solid #dadada"></div>
<div class="a" style="left:992px;top:874.69px;line-height:15px;font-size:11px;letter-spacing:-0.175px;">Device.Application.Example_ST.EoN</div>
<div class="a" style="left:1237px;top:872px;width:22px;height:22px;background:#e9e9e9;border:1px solid #b4b4b4"></div><svg class="a" style="left:1240px;top:874px;" width="17" height="18" viewBox="0 0 17 18"><circle cx="6.5" cy="6.5" r="5" fill="#cfe6fb" stroke="#7a8fa8" stroke-width="1.3"/><circle cx="5.5" cy="5.2" r="2" fill="#fff" opacity="0.8"/><path d="M10 10.5L15 16" stroke="#c89a3a" stroke-width="2.6" stroke-linecap="round"/></svg><div class="a" style="left:1267px;top:872px;width:19px;height:22px;background:#e9e9e9;border:1px solid #b4b4b4"></div><svg class="a" style="left:1272px;top:878px;" width="10" height="10" viewBox="0 0 10 10"><path d="M0.8 3H4.5V0.6L9.3 5L4.5 9.4V7H0.8Z" fill="#18c040" stroke="#063" stroke-width="1"/></svg><div class="a" style="left:1286px;top:872px;width:11px;height:22px;background:#e9e9e9;border:1px solid #b4b4b4"></div><div class="a" style="left:1293px;top:883px;width:2px;height:1px;background:#666;"></div><div class="a" style="left:1297px;top:872px;width:22px;height:22px;background:#e9e9e9;border:1px solid #b4b4b4"></div><svg class="a" style="left:1301px;top:877px;" width="14" height="13" viewBox="0 0 14 13"><path d="M1 1.5H12L7.5 6.5V11.5L5.5 10V6.5Z" fill="#f4f4f4" stroke="#444" stroke-width="1.1"/></svg><div class="a" style="left:1319px;top:872px;width:19px;height:22px;background:#e9e9e9;border:1px solid #b4b4b4"></div><svg class="a" style="left:1325px;top:878px;" width="6" height="9" viewBox="0 0 6 9"><path d="M0 0L5 4.5L0 9Z" fill="#333"/></svg><div class="a" style="left:1346px;top:872px;width:22px;height:22px;background:#cfcfcf;border:1px solid #b4b4b4"></div><svg class="a" style="left:1349px;top:875px;" width="17" height="16" viewBox="0 0 17 16"><path d="M1 4H7M4.5 1.5L7 4L4.5 6.5" fill="none" stroke="#777" stroke-width="1"/><path d="M9 2H16M9 4.5H16M11 7H16M11 9.5H16M11 12H16M11 14.5H16" stroke="#c4c4c4" stroke-width="1"/></svg><div class="a" style="left:1376px;top:872px;width:22px;height:22px;background:#e9e9e9;border:1px solid #b4b4b4"></div><svg class="a" style="left:1379px;top:875px;" width="17" height="16" viewBox="0 0 17 16"><rect x="3.5" y="1.5" width="12" height="12" fill="#fff" stroke="#2a2a8a" stroke-width="1"/><rect x="3.5" y="1.5" width="12" height="2" fill="#2a2a8a"/><path d="M8 6H14M8 8.5H14M8 11H14" stroke="#555" stroke-width="1"/><path d="M0 8.5H6M4 6L6.5 8.5L4 11" fill="none" stroke="#2a2a8a" stroke-width="1.2"/></svg><div class="a" style="left:1406px;top:872px;width:22px;height:22px;background:#e9e9e9;border:1px solid #b4b4b4"></div><svg class="a" style="left:1409px;top:875px;" width="17" height="17" viewBox="0 0 17 17"><path d="M4.5 1.5H12.5L11.5 6.5H3.5Z" fill="#fff" stroke="#444" stroke-width="1"/><path d="M6 3.5H11M5.5 5H10.5" stroke="#777" stroke-width="0.8"/><path d="M1 7.5Q1 6.5 2.5 6.5H13Q15.5 6.5 15.5 8.5V12.5H1Z" fill="#d8d8d8" stroke="#333" stroke-width="1"/><rect x="1" y="11.5" width="14.5" height="3.5" rx="1" fill="#bbb" stroke="#333" stroke-width="1"/><rect x="8.5" y="9.8" width="3.2" height="1.2" fill="#f0c000"/></svg>
<div class="a" style="left:986px;top:900px;width:443px;height:69px;background:#fff;border:1px solid #6d6d6d"></div>
<div class="a" style="left:994px;top:905.34px;line-height:17px;font-size:12px;letter-spacing:-0.003px;">Symbol</div>
<div class="a" style="left:1078px;top:905.34px;line-height:17px;font-size:12px;letter-spacing:-0.672px;">POU</div>
<div class="a" style="left:1161px;top:905.34px;line-height:17px;font-size:12px;letter-spacing:-0.143px;">Variable</div>
<div class="a" style="left:1226px;top:905.34px;line-height:17px;font-size:12px;letter-spacing:-0.448px;">Access</div>
<div class="a" style="left:1305px;top:905.34px;line-height:17px;font-size:12px;letter-spacing:0.092px;">Context</div>
<div class="a" style="left:1071px;top:902px;width:1px;height:24px;background:#e5e5e5;"></div>
<div class="a" style="left:1154px;top:902px;width:1px;height:24px;background:#e5e5e5;"></div>
<div class="a" style="left:1219px;top:902px;width:1px;height:24px;background:#e5e5e5;"></div>
<div class="a" style="left:1298px;top:902px;width:1px;height:24px;background:#e5e5e5;"></div>
<svg class="a" style="left:1109px;top:902px;" width="10" height="6" viewBox="0 0 10 6"><path d="M1 5L4.5 1.5L8 5" fill="none" stroke="#666" stroke-width="1"/></svg>
<div class="a" style="left:993px;top:931px;width:9px;height:9px;background:#fff;border:1px solid #999"></div>
<div class="a" style="left:995px;top:935px;width:5px;height:1px;background:#333;"></div>
<div class="a" style="left:1003px;top:935px;width:5px;height:1px;background:#bbb;"></div>
<div class="a" style="left:1009px;top:928.69px;line-height:15px;font-size:11px;letter-spacing:-0.802px;">EoN</div>
<div class="a" style="left:1073px;top:928.69px;line-height:15px;font-size:11px;letter-spacing:-0.498px;">Example_ST</div>
<div class="a" style="left:1156px;top:928.69px;line-height:15px;font-size:11px;letter-spacing:-0.802px;">EoN</div>
<div class="a" style="left:1221px;top:928.69px;line-height:15px;font-size:11px;letter-spacing:-0.149px;">Declaration</div>
<div class="a" style="left:1313px;top:928.69px;line-height:15px;font-size:11px;letter-spacing:-0.667px;font-weight:bold;">EoN</div>
<div class="a" style="left:1370px;top:928.69px;line-height:15px;font-size:11px;color:#555;">...</div>
<div class="a" style="left:1411px;top:901px;width:17px;height:51px;background:#f0f0f0;"></div>
<svg class="a" style="left:1415px;top:907px;" width="9" height="7" viewBox="0 0 9 7"><path d="M0.8 5.5L4.5 1.5L8.2 5.5" fill="none" stroke="#555" stroke-width="1.6"/></svg>
<svg class="a" style="left:1415px;top:938px;" width="9" height="7" viewBox="0 0 9 7"><path d="M0.8 1.5L4.5 5.5L8.2 1.5" fill="none" stroke="#555" stroke-width="1.6"/></svg>
<div class="a" style="left:987px;top:951px;width:424px;height:17px;background:#f0f0f0;"></div>
<div class="a" style="left:1411px;top:951px;width:17px;height:17px;background:#f0f0f0;"></div>
<div class="a" style="left:1005px;top:951px;width:140px;height:17px;background:#cdcdcd;"></div>
<svg class="a" style="left:993px;top:955px;" width="7" height="9" viewBox="0 0 7 9"><path d="M5.5 0.8L1.5 4.5L5.5 8.2" fill="none" stroke="#555" stroke-width="1.6"/></svg>
<svg class="a" style="left:1398px;top:955px;" width="7" height="9" viewBox="0 0 7 9"><path d="M1.5 0.8L5.5 4.5L1.5 8.2" fill="none" stroke="#555" stroke-width="1.6"/></svg>
<div class="a" style="left:1439px;top:870px;width:455px;height:102px;background:#fff;border:1px solid #555"></div>
<div class="a" style="left:1439px;top:848px;width:455px;height:22px;background:#c0cfdf;"></div>
<div class="a" style="left:1444px;top:851.99px;line-height:15px;font-size:11px;letter-spacing:0.150px;">Watch 1</div>
<svg class="a" style="left:1837px;top:858px;" width="9" height="5" viewBox="0 0 9 5"><path d="M0 0H8L4 4.5Z" fill="#000"/></svg><svg class="a" style="left:1858px;top:853px;" width="8" height="12" viewBox="0 0 8 12"><path d="M1.5 1H6.5M2.5 1V6M5.5 1V6M0.5 6.5H7.5M4 7V11" stroke="#000" stroke-width="1.3" fill="none"/><rect x="4" y="1" width="1.5" height="5" fill="#000"/></svg><svg class="a" style="left:1877px;top:854px;" width="10" height="10" viewBox="0 0 10 10"><path d="M1.5 1.5L8.5 8.5M8.5 1.5L1.5 8.5" stroke="#000" stroke-width="2.2"/></svg>
<div class="a" style="left:1446px;top:874.34px;line-height:17px;font-size:12px;letter-spacing:-0.338px;">Expression</div>
<div class="a" style="left:1692px;top:874.34px;line-height:17px;font-size:12px;letter-spacing:0.207px;">Application</div>
<div class="a" style="left:1812px;top:874.34px;line-height:17px;font-size:12px;letter-spacing:-0.254px;">Type</div>
<div class="a" style="left:1685px;top:871px;width:1px;height:44px;background:#e5e5e5;"></div>
<div class="a" style="left:1806px;top:871px;width:1px;height:44px;background:#e5e5e5;"></div>
<div class="a" style="left:1440px;top:914px;width:453px;height:1px;background:#e3e3e3;"></div>
<div class="a" style="left:1440px;top:955px;width:453px;height:16px;background:#f0f0f0;"></div>
<div class="a" style="left:1457px;top:955px;width:182px;height:16px;background:#cdcdcd;"></div>
<svg class="a" style="left:1445px;top:959px;" width="7" height="9" viewBox="0 0 7 9"><path d="M5.5 0.8L1.5 4.5L5.5 8.2" fill="none" stroke="#555" stroke-width="1.6"/></svg>
<svg class="a" style="left:1881px;top:959px;" width="7" height="9" viewBox="0 0 7 9"><path d="M1.5 0.8L5.5 4.5L1.5 8.2" fill="none" stroke="#555" stroke-width="1.6"/></svg>
<div class="a" style="left:959px;top:972px;width:946px;height:23px;background:#f6f6f5;"></div>
<div class="a" style="left:960px;top:974px;width:318px;height:21px;background:#f3f3f3;border:1px solid #8e8e8e;border-bottom:none;border-radius:3px 3px 0 0"></div>
<svg class="a" style="left:965px;top:978px;" width="12" height="13" viewBox="0 0 12 13"><rect x="0.75" y="0.75" width="10.5" height="11.5" fill="#fff" stroke="#222" stroke-width="1.5"/><path d="M3 4H9M3 6.5H9M3 9H9" stroke="#222" stroke-width="1"/></svg>
<div class="a" style="left:986px;top:976.69px;line-height:15px;font-size:11px;letter-spacing:0.201px;color:#7f7f7f;">Messages - Total 1 error(s), 1 warning(s), 63 message(s)</div>
<div class="a" style="left:959px;top:995px;width:946px;height:20px;background:#f0f0f0;border-top:1px solid #dcdcdc"></div>
<div class="a" style="left:979px;top:998.69px;line-height:15px;font-size:11px;letter-spacing:-0.121px;">Device user: Anonymous</div>
<div class="a" style="left:1111px;top:997.69px;line-height:15px;font-size:11px;letter-spacing:0.009px;">st build:</div>
<div class="a" style="left:1173px;top:997.69px;line-height:15px;font-size:11px;">0</div>
<div class="a" style="left:1203px;top:997.69px;line-height:15px;font-size:11px;font-weight:bold;">1</div>
<div class="a" style="left:1231px;top:997.69px;line-height:15px;font-size:11px;letter-spacing:-0.303px;">Precompile</div>
<div class="a" style="left:1312px;top:997px;width:63px;height:18px;background:#f00;"></div>
<div class="a" style="left:1329px;top:998.69px;line-height:15px;font-size:11px;letter-spacing:-0.691px;color:#1a0000;">STOP</div>
<div class="a" style="left:1423px;top:998.69px;line-height:15px;font-size:11px;letter-spacing:-0.234px;">Program loaded</div>
<div class="a" style="left:1580px;top:998.69px;line-height:15px;font-size:11px;letter-spacing:-0.217px;">Program unchanged</div>
<div class="a" style="left:1742px;top:998.69px;line-height:15px;font-size:11px;letter-spacing:0.036px;">Project user: (nobody)</div>
<div class="a" style="left:967px;top:997px;width:1px;height:18px;background:#dadada;"></div>
<div class="a" style="left:1107px;top:997px;width:1px;height:18px;background:#dadada;"></div>
<div class="a" style="left:1290px;top:997px;width:1px;height:18px;background:#dadada;"></div>
<div class="a" style="left:1309px;top:997px;width:1px;height:18px;background:#dadada;"></div>
<div class="a" style="left:1543px;top:997px;width:1px;height:18px;background:#dadada;"></div>
<div class="a" style="left:1711px;top:997px;width:1px;height:18px;background:#dadada;"></div>
<div class="a" style="left:1879px;top:997px;width:1px;height:18px;background:#dadada;"></div>
<svg class="a" style="left:1155px;top:999px;" width="13" height="13" viewBox="0 0 13 13"><circle cx="6.5" cy="6.5" r="6" fill="#e01010"/><path d="M4 4L9 9M9 4L4 9" stroke="#fff" stroke-width="1.9"/></svg><svg class="a" style="left:1184px;top:999px;" width="13" height="13" viewBox="0 0 13 13"><circle cx="6.5" cy="6.5" r="5.8" fill="#ffd91a" stroke="#a08a10" stroke-width="0.8"/><rect x="5.7" y="2.8" width="1.7" height="4.8" fill="#222"/><rect x="5.7" y="8.7" width="1.7" height="1.7" fill="#222"/></svg><svg class="a" style="left:1296px;top:997px;" width="14" height="16" viewBox="0 0 14 16"><path d="M2.5 8V4.5Q2.5 1.5 5.5 1.5Q8.5 1.5 8.5 4.5V6" fill="none" stroke="#222" stroke-width="1.6"/><rect x="5.5" y="7.5" width="7.5" height="7" fill="#222"/><rect x="7" y="9" width="2.5" height="2.5" fill="#fff"/></svg><div class="a" style="left:1288px;top:1008px;width:2px;height:3px;background:#2a4a2a;"></div><svg class="a" style="left:1884px;top:998px;" width="13" height="15" viewBox="0 0 13 15"><path d="M6.5 0.5L12 2.5V8Q12 12 6.5 14.5Q1 12 1 8V2.5Z" fill="#ddd" stroke="#666" stroke-width="1"/><path d="M6.5 1.5V13.5Q11 11.5 11 8V3Z" fill="#f0b030"/></svg><div class="a" style="left:1901px;top:1001px;width:4px;height:8px;background:#e89020;"></div>
</body></html>
